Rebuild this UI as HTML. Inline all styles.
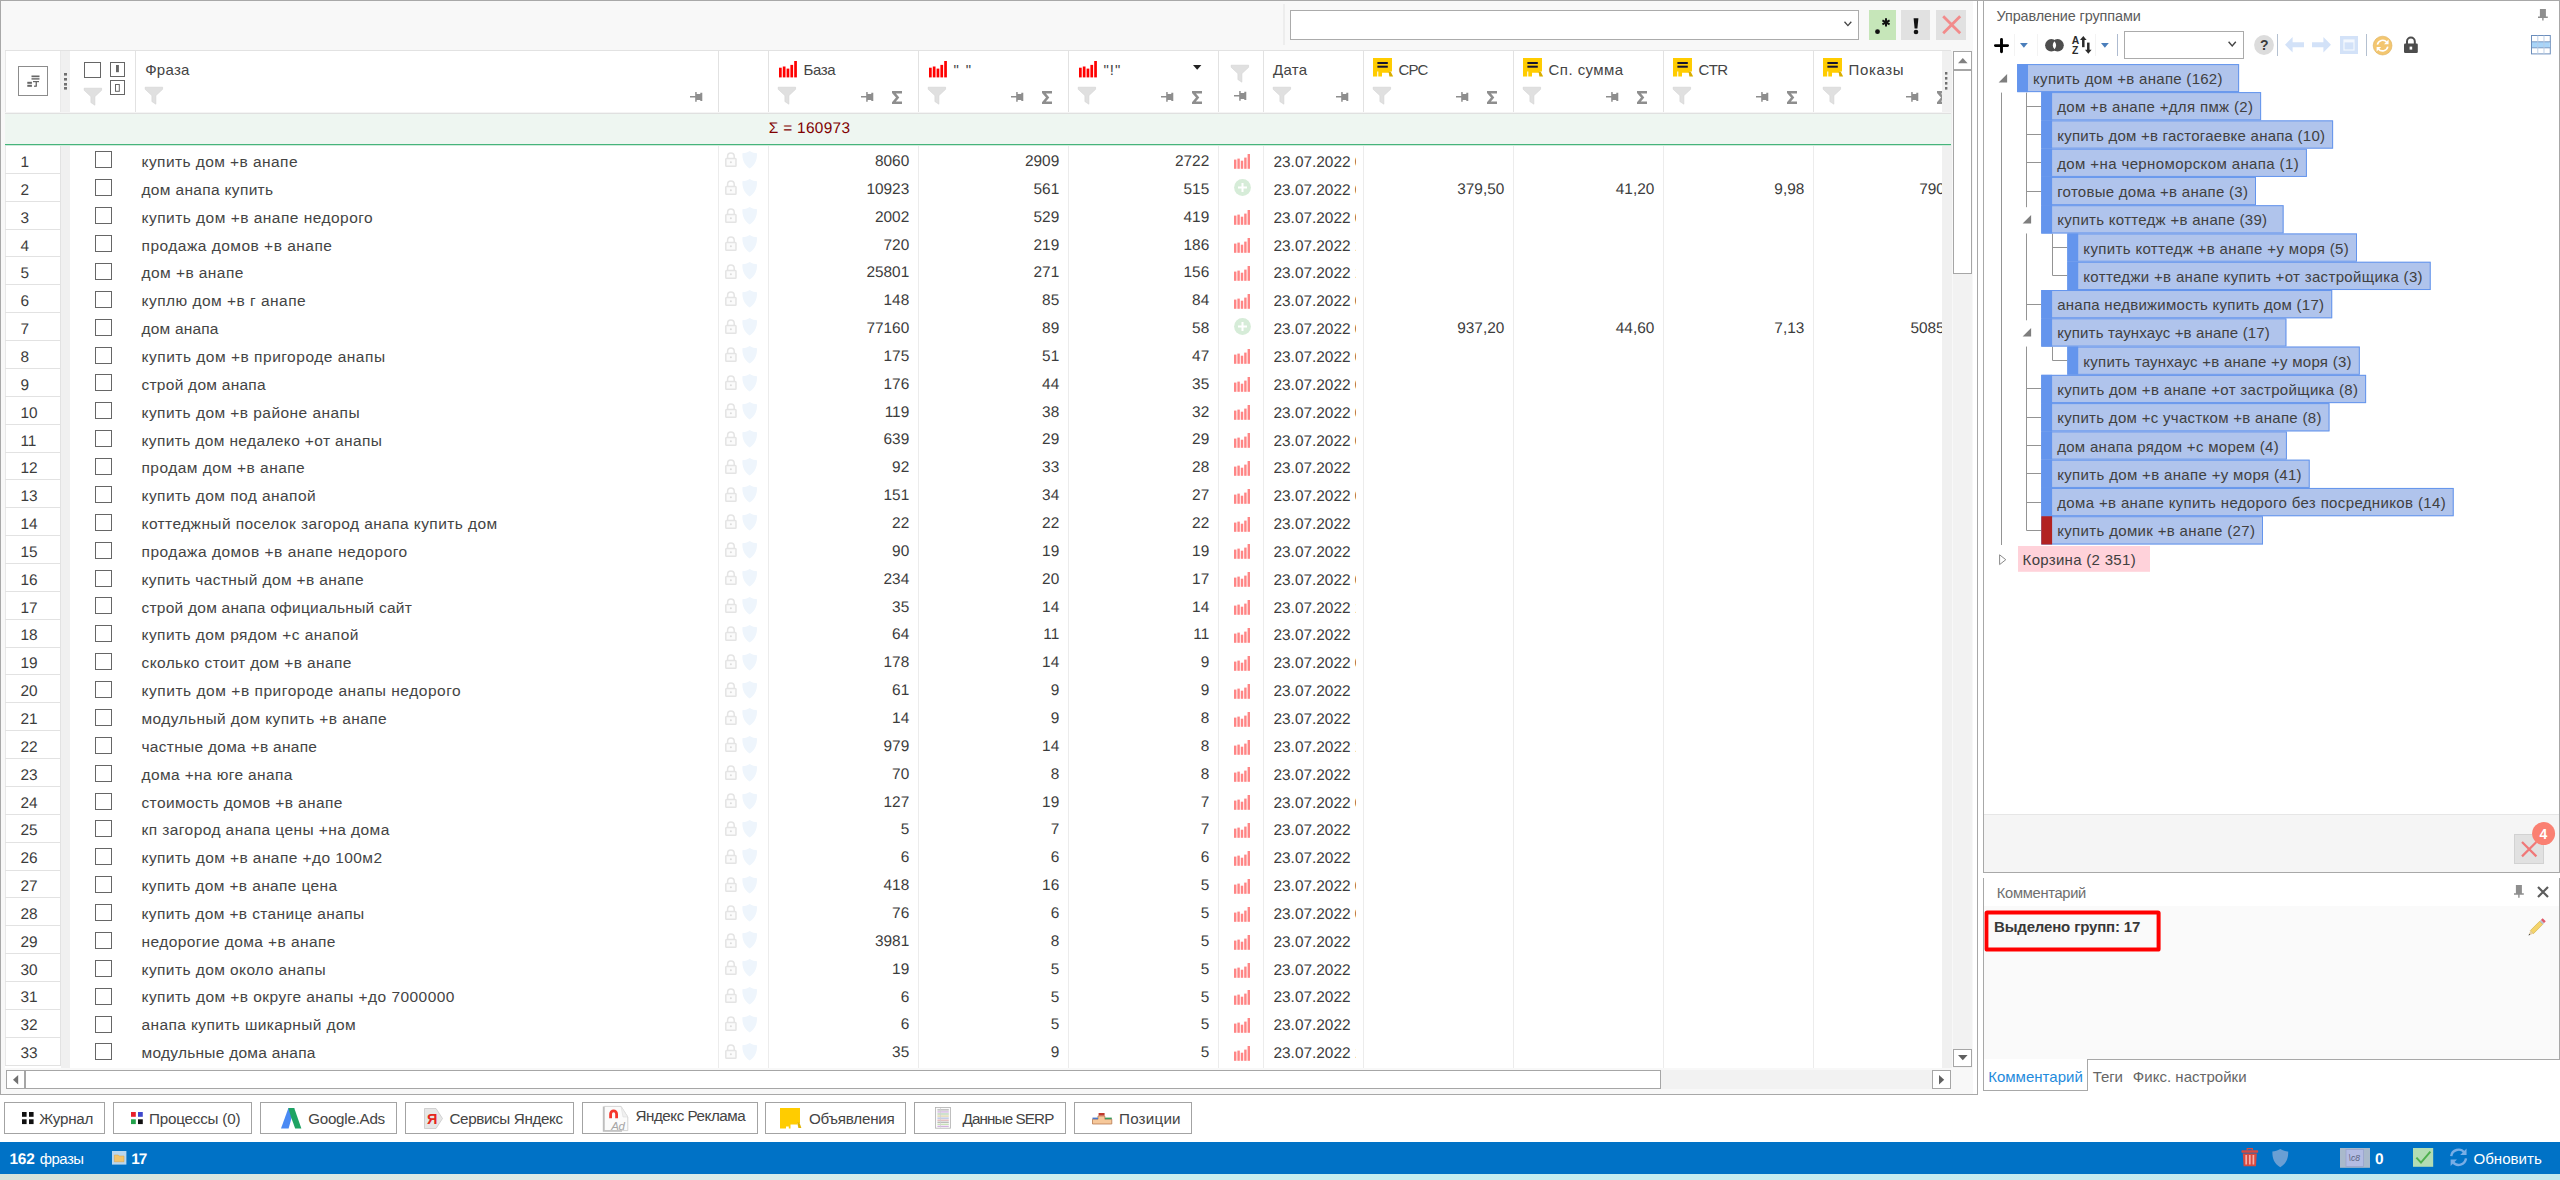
<!DOCTYPE html>
<html><head><meta charset="utf-8"><title>UI</title>
<style>
html,body{margin:0;padding:0}
html{width:2560px;height:1180px;overflow:hidden}
body{width:2560px;height:1180px;position:relative;overflow:hidden;background:#fff;font-family:"Liberation Sans", sans-serif}
.a{position:absolute;box-sizing:border-box}
.t{white-space:nowrap;line-height:1}
svg{overflow:visible}
</style></head>
<body>
<div class="a" style="left:1px;top:1px;width:1972px;height:1093px;background:#f8f8f8;"></div>
<div class="a" style="left:0px;top:0px;width:2560px;height:1px;background:#a8a8a8;"></div>
<div class="a" style="left:0px;top:0px;width:1px;height:1095px;background:#a8a8a8;"></div>
<div class="a" style="left:0px;top:1094px;width:1978px;height:1px;background:#a8a8a8;"></div>
<div class="a" style="left:1977px;top:0px;width:1px;height:1095px;background:#a8a8a8;"></div>
<div class="a" style="left:1283px;top:4px;width:2px;height:41px;background:#ededed;"></div>
<div class="a" style="left:1290px;top:10px;width:569px;height:30px;background:#fff;border:1px solid #ababab;"></div>
<svg class="a" style="left:1843.6px;top:21px;" width="8" height="6" viewBox="0 0 8 6"><path d="M0.5,0.7 L3.9,4.6 L7.3,0.7" fill="none" stroke="#444" stroke-width="1.3"/></svg>
<div class="a" style="left:1869px;top:10px;width:27px;height:30px;background:#c6e6b9;"></div>
<div class="a" style="left:1901px;top:10px;width:29px;height:30px;background:#e1e1e1;"></div>
<div class="a" style="left:1935.5px;top:10px;width:30px;height:30px;background:#e1e1e1;"></div>
<svg class="a" style="left:1874px;top:17px;" width="18" height="18" viewBox="0 0 18 18"><circle cx="3.5" cy="14.7" r="2.4" fill="#111"/><path d="M12,1.2 V9.4 M8.4,3.3 L15.6,7.3 M15.6,3.3 L8.4,7.3" stroke="#111" stroke-width="2"/></svg>
<svg class="a" style="left:1912.6px;top:18px;" width="6" height="16.4" viewBox="0 0 6 16.4"><path d="M0.6,0.2 H5.4 L4.4,10.6 H1.6 Z" fill="#111"/><circle cx="3" cy="14" r="2.3" fill="#111"/></svg>
<svg class="a" style="left:1941.6px;top:15px;" width="19.4" height="19.4" viewBox="0 0 19.4 19.4"><path d="M1.2,1.2 L18.2,18.2 M18.2,1.2 L1.2,18.2" stroke="#f28b8b" stroke-width="2.8"/></svg>
<div class="a" style="left:5px;top:50px;width:1946px;height:1018px;background:#fff;"></div>
<div class="a" style="left:61px;top:51px;width:9px;height:1017px;background:#f0f0f0;"></div>
<div class="a" style="left:1942px;top:51px;width:9.6px;height:1017px;background:#f0f0f0;"></div>
<div class="a" style="left:5px;top:50px;width:1946px;height:1px;background:#e2e2e2;"></div>
<div class="a" style="left:5px;top:112px;width:1946px;height:1px;background:#f4f4f4;"></div>
<div class="a" style="left:5px;top:113px;width:1946px;height:1px;background:#e0e0e0;"></div>
<div class="a" style="left:5px;top:51px;width:1px;height:61px;background:#e8e8e8;"></div>
<div class="a" style="left:5px;top:114px;width:1946px;height:30px;background:#eef6f1;"></div>
<div class="a" style="left:5px;top:144px;width:1946px;height:1px;background:#45b47b;"></div>
<div class="a" style="left:5px;top:145px;width:1946px;height:1px;background:#cfeadb;"></div>
<div class="a" style="left:135px;top:51px;width:1px;height:61px;background:#e2e2e2;"></div>
<div class="a" style="left:718px;top:51px;width:1px;height:61px;background:#e2e2e2;"></div>
<div class="a" style="left:768px;top:51px;width:1px;height:61px;background:#e2e2e2;"></div>
<div class="a" style="left:918px;top:51px;width:1px;height:61px;background:#e2e2e2;"></div>
<div class="a" style="left:1068px;top:51px;width:1px;height:61px;background:#e2e2e2;"></div>
<div class="a" style="left:1218px;top:51px;width:1px;height:61px;background:#e2e2e2;"></div>
<div class="a" style="left:1263px;top:51px;width:1px;height:61px;background:#e2e2e2;"></div>
<div class="a" style="left:1363px;top:51px;width:1px;height:61px;background:#e2e2e2;"></div>
<div class="a" style="left:1513px;top:51px;width:1px;height:61px;background:#e2e2e2;"></div>
<div class="a" style="left:1663px;top:51px;width:1px;height:61px;background:#e2e2e2;"></div>
<div class="a" style="left:1813px;top:51px;width:1px;height:61px;background:#e2e2e2;"></div>
<div class="a" style="left:60px;top:51px;width:1px;height:61px;background:#e9e9e9;"></div>
<div class="a" style="left:718px;top:146px;width:1px;height:922px;background:#ececec;"></div>
<div class="a" style="left:768px;top:146px;width:1px;height:922px;background:#ececec;"></div>
<div class="a" style="left:918px;top:146px;width:1px;height:922px;background:#ececec;"></div>
<div class="a" style="left:1068px;top:146px;width:1px;height:922px;background:#ececec;"></div>
<div class="a" style="left:1218px;top:146px;width:1px;height:922px;background:#ececec;"></div>
<div class="a" style="left:1263px;top:146px;width:1px;height:922px;background:#ececec;"></div>
<div class="a" style="left:1363px;top:146px;width:1px;height:922px;background:#ececec;"></div>
<div class="a" style="left:1513px;top:146px;width:1px;height:922px;background:#ececec;"></div>
<div class="a" style="left:1663px;top:146px;width:1px;height:922px;background:#ececec;"></div>
<div class="a" style="left:1813px;top:146px;width:1px;height:922px;background:#ececec;"></div>
<div class="a" style="left:60px;top:146px;width:1px;height:922px;background:#e2e2e2;"></div>
<div class="a" style="left:5px;top:146px;width:1px;height:922px;background:#e8e8e8;"></div>
<div class="a" style="left:18px;top:66px;width:30px;height:30px;background:#fff;border:1px solid #8c8c8c;"></div>
<svg class="a" style="left:26.5px;top:74.5px;" width="13" height="13" viewBox="0 0 13 13"><rect x="4.5" y="0.5" width="8" height="1.7" fill="#666"/><rect x="4.5" y="3.2" width="8" height="1.4" fill="#666"/><rect x="0.3" y="6.8" width="4.6" height="2" fill="#666"/><rect x="0.3" y="9.8" width="4.6" height="2" fill="#666"/><rect x="6" y="6" width="6" height="1.2" fill="#666"/><rect x="8.6" y="6" width="1.3" height="5.5" fill="#666"/><rect x="7" y="10.6" width="2.5" height="1.2" fill="#666"/></svg>
<svg class="a" style="left:64px;top:72.6px;" width="3" height="2.6" viewBox="0 0 3 2.6"><rect width="3" height="2.6" fill="#707070"/></svg>
<svg class="a" style="left:64px;top:77.5px;" width="3" height="2.6" viewBox="0 0 3 2.6"><rect width="3" height="2.6" fill="#707070"/></svg>
<svg class="a" style="left:64px;top:82.5px;" width="3" height="2.6" viewBox="0 0 3 2.6"><rect width="3" height="2.6" fill="#707070"/></svg>
<svg class="a" style="left:64px;top:87.4px;" width="3" height="2.6" viewBox="0 0 3 2.6"><rect width="3" height="2.6" fill="#707070"/></svg>
<div class="a" style="left:84px;top:62px;width:17px;height:16px;background:#fff;border:1px solid #666;"></div>
<div class="a" style="left:110px;top:62px;width:15px;height:15px;background:#fff;border:1px solid #666;"></div>
<div class="a" style="left:110px;top:80px;width:15px;height:15px;background:#fff;border:1px solid #666;"></div>
<svg class="a" style="left:116px;top:65.4px;" width="3" height="7.2" viewBox="0 0 3 7.2"><rect width="2.9" height="7.2" fill="#666"/></svg>
<svg class="a" style="left:115.2px;top:83.9px;" width="4.8" height="7.8" viewBox="0 0 4.8 7.8"><rect x="0.5" y="0.5" width="3.8" height="6.8" fill="none" stroke="#666" stroke-width="1"/></svg>
<svg class="a" style="left:83.6px;top:87.8px;" width="18" height="17.4" viewBox="0 0 18 17.4"><path d="M0.2,0.2 H17.6 V2.3 L10.9,8.6 V17.2 L6.9,14.6 V8.6 L0.2,2.3 Z" fill="#e0e0e0" stroke="#d2d2d2" stroke-width="0.6"/></svg>
<div class="a t" style="top:62px;font-size:15px;color:#444;letter-spacing:0.26px;left:145.2px;">Фраза</div>
<svg class="a" style="left:144.9px;top:87px;" width="18" height="17.4" viewBox="0 0 18 17.4"><path d="M0.2,0.2 H17.6 V2.3 L10.9,8.6 V17.2 L6.9,14.6 V8.6 L0.2,2.3 Z" fill="#e0e0e0" stroke="#d2d2d2" stroke-width="0.6"/></svg>
<svg class="a" style="left:690px;top:92.3px;" width="12.4" height="9.8" viewBox="0 0 12.4 9.8"><path d="M0,4.1 H5.2 V0 H6.7 V1.9 H10.3 V0.8 H12.3 V9 H10.3 V7.9 H6.7 V9.8 H5.2 V5.6 H0 Z" fill="#8e8e8e"/></svg>
<svg class="a" style="left:778.8px;top:61.4px;" width="18" height="16.5" viewBox="0 0 18 16.5"><rect x="0" y="6.7" width="2.7" height="9.7" fill="#ff0000"/><rect x="3.8" y="5.5" width="2.7" height="10.9" fill="#ff0000"/><rect x="7.6" y="7.6" width="2.7" height="8.8" fill="#ff0000"/><rect x="11.4" y="3.9" width="2.7" height="12.5" fill="#ff0000"/><rect x="15.2" y="0" width="2.7" height="16.4" fill="#ff0000"/></svg>
<div class="a t" style="top:62px;font-size:15px;color:#444;letter-spacing:-0.42px;left:803.6px;">База</div>
<svg class="a" style="left:778px;top:87.1px;" width="18" height="17.4" viewBox="0 0 18 17.4"><path d="M0.2,0.2 H17.6 V2.3 L10.9,8.6 V17.2 L6.9,14.6 V8.6 L0.2,2.3 Z" fill="#e0e0e0" stroke="#d2d2d2" stroke-width="0.6"/></svg>
<svg class="a" style="left:861px;top:92.2px;" width="12.4" height="9.8" viewBox="0 0 12.4 9.8"><path d="M0,4.1 H5.2 V0 H6.7 V1.9 H10.3 V0.8 H12.3 V9 H10.3 V7.9 H6.7 V9.8 H5.2 V5.6 H0 Z" fill="#8e8e8e"/></svg>
<svg class="a" style="left:891.8px;top:90.8px;" width="10.2" height="13.2" viewBox="0 0 10.2 13.2"><path d="M0,0 H10 V2.5 H3.9 L7.3,6.5 L3.9,10.6 H10 V13.1 H0 V11.2 L4,6.5 L0,1.9 Z" fill="#8e8e8e"/></svg>
<svg class="a" style="left:928.8px;top:61.4px;" width="18" height="16.5" viewBox="0 0 18 16.5"><rect x="0" y="6.7" width="2.7" height="9.7" fill="#ff0000"/><rect x="3.8" y="5.5" width="2.7" height="10.9" fill="#ff0000"/><rect x="7.6" y="7.6" width="2.7" height="8.8" fill="#ff0000"/><rect x="11.4" y="3.9" width="2.7" height="12.5" fill="#ff0000"/><rect x="15.2" y="0" width="2.7" height="16.4" fill="#ff0000"/></svg>
<div class="a t" style="top:62px;font-size:15px;color:#444;letter-spacing:1.39px;left:953.6px;">&quot; &quot;</div>
<svg class="a" style="left:928px;top:87.1px;" width="18" height="17.4" viewBox="0 0 18 17.4"><path d="M0.2,0.2 H17.6 V2.3 L10.9,8.6 V17.2 L6.9,14.6 V8.6 L0.2,2.3 Z" fill="#e0e0e0" stroke="#d2d2d2" stroke-width="0.6"/></svg>
<svg class="a" style="left:1011px;top:92.2px;" width="12.4" height="9.8" viewBox="0 0 12.4 9.8"><path d="M0,4.1 H5.2 V0 H6.7 V1.9 H10.3 V0.8 H12.3 V9 H10.3 V7.9 H6.7 V9.8 H5.2 V5.6 H0 Z" fill="#8e8e8e"/></svg>
<svg class="a" style="left:1041.8px;top:90.8px;" width="10.2" height="13.2" viewBox="0 0 10.2 13.2"><path d="M0,0 H10 V2.5 H3.9 L7.3,6.5 L3.9,10.6 H10 V13.1 H0 V11.2 L4,6.5 L0,1.9 Z" fill="#8e8e8e"/></svg>
<svg class="a" style="left:1078.8px;top:61.4px;" width="18" height="16.5" viewBox="0 0 18 16.5"><rect x="0" y="6.7" width="2.7" height="9.7" fill="#ff0000"/><rect x="3.8" y="5.5" width="2.7" height="10.9" fill="#ff0000"/><rect x="7.6" y="7.6" width="2.7" height="8.8" fill="#ff0000"/><rect x="11.4" y="3.9" width="2.7" height="12.5" fill="#ff0000"/><rect x="15.2" y="0" width="2.7" height="16.4" fill="#ff0000"/></svg>
<div class="a t" style="top:62px;font-size:15px;color:#444;letter-spacing:0.94px;left:1103.6px;">&quot;!&quot;</div>
<svg class="a" style="left:1078px;top:87.1px;" width="18" height="17.4" viewBox="0 0 18 17.4"><path d="M0.2,0.2 H17.6 V2.3 L10.9,8.6 V17.2 L6.9,14.6 V8.6 L0.2,2.3 Z" fill="#e0e0e0" stroke="#d2d2d2" stroke-width="0.6"/></svg>
<svg class="a" style="left:1161px;top:92.2px;" width="12.4" height="9.8" viewBox="0 0 12.4 9.8"><path d="M0,4.1 H5.2 V0 H6.7 V1.9 H10.3 V0.8 H12.3 V9 H10.3 V7.9 H6.7 V9.8 H5.2 V5.6 H0 Z" fill="#8e8e8e"/></svg>
<svg class="a" style="left:1191.8px;top:90.8px;" width="10.2" height="13.2" viewBox="0 0 10.2 13.2"><path d="M0,0 H10 V2.5 H3.9 L7.3,6.5 L3.9,10.6 H10 V13.1 H0 V11.2 L4,6.5 L0,1.9 Z" fill="#8e8e8e"/></svg>
<svg class="a" style="left:1193px;top:65.1px;" width="8.4" height="4.8" viewBox="0 0 8.4 4.8"><path d="M0,0 H8.4 L4.2,4.7 Z" fill="#222"/></svg>
<svg class="a" style="left:1231px;top:65.1px;" width="18" height="17.4" viewBox="0 0 18 17.4"><path d="M0.2,0.2 H17.6 V2.3 L10.9,8.6 V17.2 L6.9,14.6 V8.6 L0.2,2.3 Z" fill="#e0e0e0" stroke="#d2d2d2" stroke-width="0.6"/></svg>
<svg class="a" style="left:1234.3px;top:91.3px;" width="12.4" height="9.8" viewBox="0 0 12.4 9.8"><path d="M0,4.1 H5.2 V0 H6.7 V1.9 H10.3 V0.8 H12.3 V9 H10.3 V7.9 H6.7 V9.8 H5.2 V5.6 H0 Z" fill="#8e8e8e"/></svg>
<div class="a t" style="top:62px;font-size:15px;color:#444;letter-spacing:0.26px;left:1273.1px;">Дата</div>
<svg class="a" style="left:1273px;top:87.1px;" width="18" height="17.4" viewBox="0 0 18 17.4"><path d="M0.2,0.2 H17.6 V2.3 L10.9,8.6 V17.2 L6.9,14.6 V8.6 L0.2,2.3 Z" fill="#e0e0e0" stroke="#d2d2d2" stroke-width="0.6"/></svg>
<svg class="a" style="left:1336px;top:92.2px;" width="12.4" height="9.8" viewBox="0 0 12.4 9.8"><path d="M0,4.1 H5.2 V0 H6.7 V1.9 H10.3 V0.8 H12.3 V9 H10.3 V7.9 H6.7 V9.8 H5.2 V5.6 H0 Z" fill="#8e8e8e"/></svg>
<svg class="a" style="left:1373px;top:58.4px;" width="20.2" height="19" viewBox="0 0 20.2 19"><path d="M0,0 H19 V13.6 H16.2 V14.8 H9 V18.6 H5.3 V13.6 H4.2 V18.6 H0 Z" fill="#ffcc00"/><path d="M15.6,13.4 H17.6 L20.2,18.6 H16.4 Z" fill="#d9ad00"/><rect x="4.4" y="4" width="10.4" height="2" fill="#151530"/><rect x="4.4" y="7.7" width="10.4" height="2" fill="#151530"/></svg>
<div class="a t" style="top:62px;font-size:15px;color:#444;letter-spacing:-0.94px;left:1398.6px;">CPC</div>
<svg class="a" style="left:1373px;top:87.1px;" width="18" height="17.4" viewBox="0 0 18 17.4"><path d="M0.2,0.2 H17.6 V2.3 L10.9,8.6 V17.2 L6.9,14.6 V8.6 L0.2,2.3 Z" fill="#e0e0e0" stroke="#d2d2d2" stroke-width="0.6"/></svg>
<svg class="a" style="left:1456px;top:92.2px;" width="12.4" height="9.8" viewBox="0 0 12.4 9.8"><path d="M0,4.1 H5.2 V0 H6.7 V1.9 H10.3 V0.8 H12.3 V9 H10.3 V7.9 H6.7 V9.8 H5.2 V5.6 H0 Z" fill="#8e8e8e"/></svg>
<svg class="a" style="left:1486.8px;top:90.8px;" width="10.2" height="13.2" viewBox="0 0 10.2 13.2"><path d="M0,0 H10 V2.5 H3.9 L7.3,6.5 L3.9,10.6 H10 V13.1 H0 V11.2 L4,6.5 L0,1.9 Z" fill="#8e8e8e"/></svg>
<svg class="a" style="left:1523px;top:58.4px;" width="20.2" height="19" viewBox="0 0 20.2 19"><path d="M0,0 H19 V13.6 H16.2 V14.8 H9 V18.6 H5.3 V13.6 H4.2 V18.6 H0 Z" fill="#ffcc00"/><path d="M15.6,13.4 H17.6 L20.2,18.6 H16.4 Z" fill="#d9ad00"/><rect x="4.4" y="4" width="10.4" height="2" fill="#151530"/><rect x="4.4" y="7.7" width="10.4" height="2" fill="#151530"/></svg>
<div class="a t" style="top:62px;font-size:15px;color:#444;letter-spacing:0.44px;left:1548.6px;">Сп. сумма</div>
<svg class="a" style="left:1523px;top:87.1px;" width="18" height="17.4" viewBox="0 0 18 17.4"><path d="M0.2,0.2 H17.6 V2.3 L10.9,8.6 V17.2 L6.9,14.6 V8.6 L0.2,2.3 Z" fill="#e0e0e0" stroke="#d2d2d2" stroke-width="0.6"/></svg>
<svg class="a" style="left:1606px;top:92.2px;" width="12.4" height="9.8" viewBox="0 0 12.4 9.8"><path d="M0,4.1 H5.2 V0 H6.7 V1.9 H10.3 V0.8 H12.3 V9 H10.3 V7.9 H6.7 V9.8 H5.2 V5.6 H0 Z" fill="#8e8e8e"/></svg>
<svg class="a" style="left:1636.8px;top:90.8px;" width="10.2" height="13.2" viewBox="0 0 10.2 13.2"><path d="M0,0 H10 V2.5 H3.9 L7.3,6.5 L3.9,10.6 H10 V13.1 H0 V11.2 L4,6.5 L0,1.9 Z" fill="#8e8e8e"/></svg>
<svg class="a" style="left:1673px;top:58.4px;" width="20.2" height="19" viewBox="0 0 20.2 19"><path d="M0,0 H19 V13.6 H16.2 V14.8 H9 V18.6 H5.3 V13.6 H4.2 V18.6 H0 Z" fill="#ffcc00"/><path d="M15.6,13.4 H17.6 L20.2,18.6 H16.4 Z" fill="#d9ad00"/><rect x="4.4" y="4" width="10.4" height="2" fill="#151530"/><rect x="4.4" y="7.7" width="10.4" height="2" fill="#151530"/></svg>
<div class="a t" style="top:62px;font-size:15px;color:#444;letter-spacing:-0.66px;left:1698.6px;">CTR</div>
<svg class="a" style="left:1673px;top:87.1px;" width="18" height="17.4" viewBox="0 0 18 17.4"><path d="M0.2,0.2 H17.6 V2.3 L10.9,8.6 V17.2 L6.9,14.6 V8.6 L0.2,2.3 Z" fill="#e0e0e0" stroke="#d2d2d2" stroke-width="0.6"/></svg>
<svg class="a" style="left:1756px;top:92.2px;" width="12.4" height="9.8" viewBox="0 0 12.4 9.8"><path d="M0,4.1 H5.2 V0 H6.7 V1.9 H10.3 V0.8 H12.3 V9 H10.3 V7.9 H6.7 V9.8 H5.2 V5.6 H0 Z" fill="#8e8e8e"/></svg>
<svg class="a" style="left:1786.8px;top:90.8px;" width="10.2" height="13.2" viewBox="0 0 10.2 13.2"><path d="M0,0 H10 V2.5 H3.9 L7.3,6.5 L3.9,10.6 H10 V13.1 H0 V11.2 L4,6.5 L0,1.9 Z" fill="#8e8e8e"/></svg>
<svg class="a" style="left:1823px;top:58.4px;" width="20.2" height="19" viewBox="0 0 20.2 19"><path d="M0,0 H19 V13.6 H16.2 V14.8 H9 V18.6 H5.3 V13.6 H4.2 V18.6 H0 Z" fill="#ffcc00"/><path d="M15.6,13.4 H17.6 L20.2,18.6 H16.4 Z" fill="#d9ad00"/><rect x="4.4" y="4" width="10.4" height="2" fill="#151530"/><rect x="4.4" y="7.7" width="10.4" height="2" fill="#151530"/></svg>
<div class="a t" style="top:62px;font-size:15px;color:#444;letter-spacing:0.63px;left:1848.6px;">Показы</div>
<svg class="a" style="left:1823px;top:87.1px;" width="18" height="17.4" viewBox="0 0 18 17.4"><path d="M0.2,0.2 H17.6 V2.3 L10.9,8.6 V17.2 L6.9,14.6 V8.6 L0.2,2.3 Z" fill="#e0e0e0" stroke="#d2d2d2" stroke-width="0.6"/></svg>
<svg class="a" style="left:1906px;top:92.2px;" width="12.4" height="9.8" viewBox="0 0 12.4 9.8"><path d="M0,4.1 H5.2 V0 H6.7 V1.9 H10.3 V0.8 H12.3 V9 H10.3 V7.9 H6.7 V9.8 H5.2 V5.6 H0 Z" fill="#8e8e8e"/></svg>
<div class="a" style="left:1936px;top:88px;width:6px;height:20px;overflow:hidden"><svg class="a" style="left:1px;top:2.8px" width="10.2" height="13.2" viewBox="0 0 10.2 13.2"><path d="M0,0 H10 V2.5 H3.9 L7.3,6.5 L3.9,10.6 H10 V13.1 H0 V11.2 L4,6.5 L0,1.9 Z" fill="#8e8e8e"/></svg></div>
<svg class="a" style="left:1945px;top:72.3px;" width="2.4" height="2.6" viewBox="0 0 2.4 2.6"><rect width="2.4" height="2.6" fill="#707070"/></svg>
<svg class="a" style="left:1945px;top:77.2px;" width="2.4" height="2.6" viewBox="0 0 2.4 2.6"><rect width="2.4" height="2.6" fill="#707070"/></svg>
<svg class="a" style="left:1945px;top:82.2px;" width="2.4" height="2.6" viewBox="0 0 2.4 2.6"><rect width="2.4" height="2.6" fill="#707070"/></svg>
<svg class="a" style="left:1945px;top:87.2px;" width="2.4" height="2.6" viewBox="0 0 2.4 2.6"><rect width="2.4" height="2.6" fill="#707070"/></svg>
<div class="a t" style="top:121px;font-size:15.4px;color:#800000;letter-spacing:0.31px;text-rendering:geometricPrecision;left:768.8px;">Σ = 160973</div>
<div class="a" style="left:5px;top:173px;width:56px;height:1px;background:#e2e2e2;"></div>
<div class="a t" style="top:155px;font-size:15.4px;color:#3c3c3c;text-rendering:geometricPrecision;left:20.4px;">1</div>
<div class="a" style="left:95px;top:151px;width:17px;height:17px;background:#fff;border:1px solid #666;"></div>
<div class="a t" style="top:154px;font-size:15.5px;color:#444;letter-spacing:0.43px;left:141.5px;">купить дом +в анапе</div>
<svg class="a" style="left:725.1px;top:152.1px;" width="11.8" height="15" viewBox="0 0 11.8 15"><path d="M2.6,6.4 V4.2 A3.3,3.3 0 0 1 9.2,4.2 V6.4" fill="none" stroke="#e4e4e4" stroke-width="1.5"/><rect x="0.8" y="6.4" width="10.2" height="7.8" rx="0.8" fill="#fbfbfb" stroke="#e4e4e4" stroke-width="1.5"/><circle cx="5.9" cy="10.3" r="1" fill="#dcdcdc"/></svg>
<svg class="a" style="left:742.4px;top:150.9px;" width="15.4" height="17.6" viewBox="0 0 15.4 17.6"><path d="M7.7,0 C5.2,1.6 2.7,2.1 0.4,2.3 C0.2,8.2 1.6,13.6 7.7,17.5 C13.8,13.6 15.2,8.2 15,2.3 C12.7,2.1 10.2,1.6 7.7,0 Z" fill="#eef5fc"/></svg>
<div class="a t" style="top:154px;font-size:15.4px;color:#3c3c3c;text-rendering:geometricPrecision;right:1650.8px;">8060</div>
<div class="a t" style="top:154px;font-size:15.4px;color:#3c3c3c;text-rendering:geometricPrecision;right:1500.8px;">2909</div>
<div class="a t" style="top:154px;font-size:15.4px;color:#3c3c3c;text-rendering:geometricPrecision;right:1350.8px;">2722</div>
<svg class="a" style="left:1233.9px;top:154.2px;" width="16.2" height="15" viewBox="0 0 16.2 15"><rect x="0" y="5.6" width="2.4" height="9.2" fill="#ff8585"/><rect x="3.4" y="4.6" width="2.4" height="10.2" fill="#ff8585"/><rect x="6.8" y="6.7" width="2.4" height="8.1" fill="#ff8585"/><rect x="10.2" y="3.6" width="2.4" height="11.2" fill="#ff8585"/><rect x="13.6" y="0" width="2.4" height="14.8" fill="#ff8585"/></svg>
<div class="a" style="left:1273.5px;top:153px;width:82.9px;height:22.48px;overflow:hidden"><div class="a t" style="font-size:15.4px;color:#3c3c3c;left:0;top:2px;text-rendering:geometricPrecision;">23.07.2022 09:41</div></div>
<div class="a" style="left:5px;top:201px;width:56px;height:1px;background:#e2e2e2;"></div>
<div class="a t" style="top:183px;font-size:15.4px;color:#3c3c3c;text-rendering:geometricPrecision;left:20.4px;">2</div>
<div class="a" style="left:95px;top:179px;width:17px;height:17px;background:#fff;border:1px solid #666;"></div>
<div class="a t" style="top:182px;font-size:15.5px;color:#444;letter-spacing:0.33px;left:141.5px;">дом анапа купить</div>
<svg class="a" style="left:725.1px;top:179.97px;" width="11.8" height="15" viewBox="0 0 11.8 15"><path d="M2.6,6.4 V4.2 A3.3,3.3 0 0 1 9.2,4.2 V6.4" fill="none" stroke="#e4e4e4" stroke-width="1.5"/><rect x="0.8" y="6.4" width="10.2" height="7.8" rx="0.8" fill="#fbfbfb" stroke="#e4e4e4" stroke-width="1.5"/><circle cx="5.9" cy="10.3" r="1" fill="#dcdcdc"/></svg>
<svg class="a" style="left:742.4px;top:178.78px;" width="15.4" height="17.6" viewBox="0 0 15.4 17.6"><path d="M7.7,0 C5.2,1.6 2.7,2.1 0.4,2.3 C0.2,8.2 1.6,13.6 7.7,17.5 C13.8,13.6 15.2,8.2 15,2.3 C12.7,2.1 10.2,1.6 7.7,0 Z" fill="#eef5fc"/></svg>
<div class="a t" style="top:182px;font-size:15.4px;color:#3c3c3c;text-rendering:geometricPrecision;right:1650.8px;">10923</div>
<div class="a t" style="top:182px;font-size:15.4px;color:#3c3c3c;text-rendering:geometricPrecision;right:1500.8px;">561</div>
<div class="a t" style="top:182px;font-size:15.4px;color:#3c3c3c;text-rendering:geometricPrecision;right:1350.8px;">515</div>
<svg class="a" style="left:1233.5px;top:178.78px;" width="17" height="17" viewBox="0 0 17 17"><circle cx="8.5" cy="8.5" r="8.4" fill="#d6ecd8"/><path d="M8.5,4 V13 M4,8.5 H13" stroke="#fff" stroke-width="2"/></svg>
<div class="a" style="left:1273.5px;top:181px;width:82.9px;height:22.48px;overflow:hidden"><div class="a t" style="font-size:15.4px;color:#3c3c3c;left:0;top:2px;text-rendering:geometricPrecision;">23.07.2022 09:41</div></div>
<div class="a t" style="top:182px;font-size:15.4px;color:#3c3c3c;text-rendering:geometricPrecision;right:1055.7px;">379,50</div>
<div class="a t" style="top:182px;font-size:15.4px;color:#3c3c3c;text-rendering:geometricPrecision;right:905.7px;">41,20</div>
<div class="a t" style="top:182px;font-size:15.4px;color:#3c3c3c;text-rendering:geometricPrecision;right:755.7px;">9,98</div>
<div class="a" style="left:1919.2px;top:180px;width:22.8px;height:22.48px;overflow:hidden"><div class="a t" style="font-size:15.4px;color:#3c3c3c;left:0;top:2px;text-rendering:geometricPrecision;">7903</div></div>
<div class="a" style="left:5px;top:229px;width:56px;height:1px;background:#e2e2e2;"></div>
<div class="a t" style="top:211px;font-size:15.4px;color:#3c3c3c;text-rendering:geometricPrecision;left:20.4px;">3</div>
<div class="a" style="left:95px;top:207px;width:17px;height:17px;background:#fff;border:1px solid #666;"></div>
<div class="a t" style="top:210px;font-size:15.5px;color:#444;letter-spacing:0.48px;left:141.5px;">купить дом +в анапе недорого</div>
<svg class="a" style="left:725.1px;top:207.85px;" width="11.8" height="15" viewBox="0 0 11.8 15"><path d="M2.6,6.4 V4.2 A3.3,3.3 0 0 1 9.2,4.2 V6.4" fill="none" stroke="#e4e4e4" stroke-width="1.5"/><rect x="0.8" y="6.4" width="10.2" height="7.8" rx="0.8" fill="#fbfbfb" stroke="#e4e4e4" stroke-width="1.5"/><circle cx="5.9" cy="10.3" r="1" fill="#dcdcdc"/></svg>
<svg class="a" style="left:742.4px;top:206.65px;" width="15.4" height="17.6" viewBox="0 0 15.4 17.6"><path d="M7.7,0 C5.2,1.6 2.7,2.1 0.4,2.3 C0.2,8.2 1.6,13.6 7.7,17.5 C13.8,13.6 15.2,8.2 15,2.3 C12.7,2.1 10.2,1.6 7.7,0 Z" fill="#eef5fc"/></svg>
<div class="a t" style="top:210px;font-size:15.4px;color:#3c3c3c;text-rendering:geometricPrecision;right:1650.8px;">2002</div>
<div class="a t" style="top:210px;font-size:15.4px;color:#3c3c3c;text-rendering:geometricPrecision;right:1500.8px;">529</div>
<div class="a t" style="top:210px;font-size:15.4px;color:#3c3c3c;text-rendering:geometricPrecision;right:1350.8px;">419</div>
<svg class="a" style="left:1233.9px;top:209.95px;" width="16.2" height="15" viewBox="0 0 16.2 15"><rect x="0" y="5.6" width="2.4" height="9.2" fill="#ff8585"/><rect x="3.4" y="4.6" width="2.4" height="10.2" fill="#ff8585"/><rect x="6.8" y="6.7" width="2.4" height="8.1" fill="#ff8585"/><rect x="10.2" y="3.6" width="2.4" height="11.2" fill="#ff8585"/><rect x="13.6" y="0" width="2.4" height="14.8" fill="#ff8585"/></svg>
<div class="a" style="left:1273.5px;top:209px;width:82.9px;height:22.48px;overflow:hidden"><div class="a t" style="font-size:15.4px;color:#3c3c3c;left:0;top:2px;text-rendering:geometricPrecision;">23.07.2022 09:41</div></div>
<div class="a" style="left:5px;top:256px;width:56px;height:1px;background:#e2e2e2;"></div>
<div class="a t" style="top:239px;font-size:15.4px;color:#3c3c3c;text-rendering:geometricPrecision;left:20.4px;">4</div>
<div class="a" style="left:95px;top:235px;width:17px;height:17px;background:#fff;border:1px solid #666;"></div>
<div class="a t" style="top:238px;font-size:15.5px;color:#444;letter-spacing:0.49px;left:141.5px;">продажа домов +в анапе</div>
<svg class="a" style="left:725.1px;top:235.72px;" width="11.8" height="15" viewBox="0 0 11.8 15"><path d="M2.6,6.4 V4.2 A3.3,3.3 0 0 1 9.2,4.2 V6.4" fill="none" stroke="#e4e4e4" stroke-width="1.5"/><rect x="0.8" y="6.4" width="10.2" height="7.8" rx="0.8" fill="#fbfbfb" stroke="#e4e4e4" stroke-width="1.5"/><circle cx="5.9" cy="10.3" r="1" fill="#dcdcdc"/></svg>
<svg class="a" style="left:742.4px;top:234.53px;" width="15.4" height="17.6" viewBox="0 0 15.4 17.6"><path d="M7.7,0 C5.2,1.6 2.7,2.1 0.4,2.3 C0.2,8.2 1.6,13.6 7.7,17.5 C13.8,13.6 15.2,8.2 15,2.3 C12.7,2.1 10.2,1.6 7.7,0 Z" fill="#eef5fc"/></svg>
<div class="a t" style="top:238px;font-size:15.4px;color:#3c3c3c;text-rendering:geometricPrecision;right:1650.8px;">720</div>
<div class="a t" style="top:238px;font-size:15.4px;color:#3c3c3c;text-rendering:geometricPrecision;right:1500.8px;">219</div>
<div class="a t" style="top:238px;font-size:15.4px;color:#3c3c3c;text-rendering:geometricPrecision;right:1350.8px;">186</div>
<svg class="a" style="left:1233.9px;top:237.83px;" width="16.2" height="15" viewBox="0 0 16.2 15"><rect x="0" y="5.6" width="2.4" height="9.2" fill="#ff8585"/><rect x="3.4" y="4.6" width="2.4" height="10.2" fill="#ff8585"/><rect x="6.8" y="6.7" width="2.4" height="8.1" fill="#ff8585"/><rect x="10.2" y="3.6" width="2.4" height="11.2" fill="#ff8585"/><rect x="13.6" y="0" width="2.4" height="14.8" fill="#ff8585"/></svg>
<div class="a" style="left:1273.5px;top:237px;width:82.9px;height:22.48px;overflow:hidden"><div class="a t" style="font-size:15.4px;color:#3c3c3c;left:0;top:2px;text-rendering:geometricPrecision;">23.07.2022 19:41</div></div>
<div class="a" style="left:5px;top:284px;width:56px;height:1px;background:#e2e2e2;"></div>
<div class="a t" style="top:266px;font-size:15.4px;color:#3c3c3c;text-rendering:geometricPrecision;left:20.4px;">5</div>
<div class="a" style="left:95px;top:263px;width:17px;height:17px;background:#fff;border:1px solid #666;"></div>
<div class="a t" style="top:265px;font-size:15.5px;color:#444;letter-spacing:0.44px;left:141.5px;">дом +в анапе</div>
<svg class="a" style="left:725.1px;top:263.6px;" width="11.8" height="15" viewBox="0 0 11.8 15"><path d="M2.6,6.4 V4.2 A3.3,3.3 0 0 1 9.2,4.2 V6.4" fill="none" stroke="#e4e4e4" stroke-width="1.5"/><rect x="0.8" y="6.4" width="10.2" height="7.8" rx="0.8" fill="#fbfbfb" stroke="#e4e4e4" stroke-width="1.5"/><circle cx="5.9" cy="10.3" r="1" fill="#dcdcdc"/></svg>
<svg class="a" style="left:742.4px;top:262.4px;" width="15.4" height="17.6" viewBox="0 0 15.4 17.6"><path d="M7.7,0 C5.2,1.6 2.7,2.1 0.4,2.3 C0.2,8.2 1.6,13.6 7.7,17.5 C13.8,13.6 15.2,8.2 15,2.3 C12.7,2.1 10.2,1.6 7.7,0 Z" fill="#eef5fc"/></svg>
<div class="a t" style="top:265px;font-size:15.4px;color:#3c3c3c;text-rendering:geometricPrecision;right:1650.8px;">25801</div>
<div class="a t" style="top:265px;font-size:15.4px;color:#3c3c3c;text-rendering:geometricPrecision;right:1500.8px;">271</div>
<div class="a t" style="top:265px;font-size:15.4px;color:#3c3c3c;text-rendering:geometricPrecision;right:1350.8px;">156</div>
<svg class="a" style="left:1233.9px;top:265.7px;" width="16.2" height="15" viewBox="0 0 16.2 15"><rect x="0" y="5.6" width="2.4" height="9.2" fill="#ff8585"/><rect x="3.4" y="4.6" width="2.4" height="10.2" fill="#ff8585"/><rect x="6.8" y="6.7" width="2.4" height="8.1" fill="#ff8585"/><rect x="10.2" y="3.6" width="2.4" height="11.2" fill="#ff8585"/><rect x="13.6" y="0" width="2.4" height="14.8" fill="#ff8585"/></svg>
<div class="a" style="left:1273.5px;top:264px;width:82.9px;height:22.48px;overflow:hidden"><div class="a t" style="font-size:15.4px;color:#3c3c3c;left:0;top:2px;text-rendering:geometricPrecision;">23.07.2022 19:41</div></div>
<div class="a" style="left:5px;top:312px;width:56px;height:1px;background:#e2e2e2;"></div>
<div class="a t" style="top:294px;font-size:15.4px;color:#3c3c3c;text-rendering:geometricPrecision;left:20.4px;">6</div>
<div class="a" style="left:95px;top:291px;width:17px;height:17px;background:#fff;border:1px solid #666;"></div>
<div class="a t" style="top:293px;font-size:15.5px;color:#444;letter-spacing:0.48px;left:141.5px;">куплю дом +в г анапе</div>
<svg class="a" style="left:725.1px;top:291.47px;" width="11.8" height="15" viewBox="0 0 11.8 15"><path d="M2.6,6.4 V4.2 A3.3,3.3 0 0 1 9.2,4.2 V6.4" fill="none" stroke="#e4e4e4" stroke-width="1.5"/><rect x="0.8" y="6.4" width="10.2" height="7.8" rx="0.8" fill="#fbfbfb" stroke="#e4e4e4" stroke-width="1.5"/><circle cx="5.9" cy="10.3" r="1" fill="#dcdcdc"/></svg>
<svg class="a" style="left:742.4px;top:290.27px;" width="15.4" height="17.6" viewBox="0 0 15.4 17.6"><path d="M7.7,0 C5.2,1.6 2.7,2.1 0.4,2.3 C0.2,8.2 1.6,13.6 7.7,17.5 C13.8,13.6 15.2,8.2 15,2.3 C12.7,2.1 10.2,1.6 7.7,0 Z" fill="#eef5fc"/></svg>
<div class="a t" style="top:293px;font-size:15.4px;color:#3c3c3c;text-rendering:geometricPrecision;right:1650.8px;">148</div>
<div class="a t" style="top:293px;font-size:15.4px;color:#3c3c3c;text-rendering:geometricPrecision;right:1500.8px;">85</div>
<div class="a t" style="top:293px;font-size:15.4px;color:#3c3c3c;text-rendering:geometricPrecision;right:1350.8px;">84</div>
<svg class="a" style="left:1233.9px;top:293.57px;" width="16.2" height="15" viewBox="0 0 16.2 15"><rect x="0" y="5.6" width="2.4" height="9.2" fill="#ff8585"/><rect x="3.4" y="4.6" width="2.4" height="10.2" fill="#ff8585"/><rect x="6.8" y="6.7" width="2.4" height="8.1" fill="#ff8585"/><rect x="10.2" y="3.6" width="2.4" height="11.2" fill="#ff8585"/><rect x="13.6" y="0" width="2.4" height="14.8" fill="#ff8585"/></svg>
<div class="a" style="left:1273.5px;top:292px;width:82.9px;height:22.48px;overflow:hidden"><div class="a t" style="font-size:15.4px;color:#3c3c3c;left:0;top:2px;text-rendering:geometricPrecision;">23.07.2022 09:41</div></div>
<div class="a" style="left:5px;top:340px;width:56px;height:1px;background:#e2e2e2;"></div>
<div class="a t" style="top:322px;font-size:15.4px;color:#3c3c3c;text-rendering:geometricPrecision;left:20.4px;">7</div>
<div class="a" style="left:95px;top:319px;width:17px;height:17px;background:#fff;border:1px solid #666;"></div>
<div class="a t" style="top:321px;font-size:15.5px;color:#444;letter-spacing:0.19px;left:141.5px;">дом анапа</div>
<svg class="a" style="left:725.1px;top:319.35px;" width="11.8" height="15" viewBox="0 0 11.8 15"><path d="M2.6,6.4 V4.2 A3.3,3.3 0 0 1 9.2,4.2 V6.4" fill="none" stroke="#e4e4e4" stroke-width="1.5"/><rect x="0.8" y="6.4" width="10.2" height="7.8" rx="0.8" fill="#fbfbfb" stroke="#e4e4e4" stroke-width="1.5"/><circle cx="5.9" cy="10.3" r="1" fill="#dcdcdc"/></svg>
<svg class="a" style="left:742.4px;top:318.15px;" width="15.4" height="17.6" viewBox="0 0 15.4 17.6"><path d="M7.7,0 C5.2,1.6 2.7,2.1 0.4,2.3 C0.2,8.2 1.6,13.6 7.7,17.5 C13.8,13.6 15.2,8.2 15,2.3 C12.7,2.1 10.2,1.6 7.7,0 Z" fill="#eef5fc"/></svg>
<div class="a t" style="top:321px;font-size:15.4px;color:#3c3c3c;text-rendering:geometricPrecision;right:1650.8px;">77160</div>
<div class="a t" style="top:321px;font-size:15.4px;color:#3c3c3c;text-rendering:geometricPrecision;right:1500.8px;">89</div>
<div class="a t" style="top:321px;font-size:15.4px;color:#3c3c3c;text-rendering:geometricPrecision;right:1350.8px;">58</div>
<svg class="a" style="left:1233.5px;top:318.15px;" width="17" height="17" viewBox="0 0 17 17"><circle cx="8.5" cy="8.5" r="8.4" fill="#d6ecd8"/><path d="M8.5,4 V13 M4,8.5 H13" stroke="#fff" stroke-width="2"/></svg>
<div class="a" style="left:1273.5px;top:320px;width:82.9px;height:22.48px;overflow:hidden"><div class="a t" style="font-size:15.4px;color:#3c3c3c;left:0;top:2px;text-rendering:geometricPrecision;">23.07.2022 09:41</div></div>
<div class="a t" style="top:321px;font-size:15.4px;color:#3c3c3c;text-rendering:geometricPrecision;right:1055.7px;">937,20</div>
<div class="a t" style="top:321px;font-size:15.4px;color:#3c3c3c;text-rendering:geometricPrecision;right:905.7px;">44,60</div>
<div class="a t" style="top:321px;font-size:15.4px;color:#3c3c3c;text-rendering:geometricPrecision;right:755.7px;">7,13</div>
<div class="a" style="left:1910.4px;top:319px;width:31.6px;height:22.48px;overflow:hidden"><div class="a t" style="font-size:15.4px;color:#3c3c3c;left:0;top:2px;text-rendering:geometricPrecision;">50853</div></div>
<div class="a" style="left:5px;top:368px;width:56px;height:1px;background:#e2e2e2;"></div>
<div class="a t" style="top:350px;font-size:15.4px;color:#3c3c3c;text-rendering:geometricPrecision;left:20.4px;">8</div>
<div class="a" style="left:95px;top:347px;width:17px;height:17px;background:#fff;border:1px solid #666;"></div>
<div class="a t" style="top:349px;font-size:15.5px;color:#444;letter-spacing:0.51px;left:141.5px;">купить дом +в пригороде анапы</div>
<svg class="a" style="left:725.1px;top:347.22px;" width="11.8" height="15" viewBox="0 0 11.8 15"><path d="M2.6,6.4 V4.2 A3.3,3.3 0 0 1 9.2,4.2 V6.4" fill="none" stroke="#e4e4e4" stroke-width="1.5"/><rect x="0.8" y="6.4" width="10.2" height="7.8" rx="0.8" fill="#fbfbfb" stroke="#e4e4e4" stroke-width="1.5"/><circle cx="5.9" cy="10.3" r="1" fill="#dcdcdc"/></svg>
<svg class="a" style="left:742.4px;top:346.02px;" width="15.4" height="17.6" viewBox="0 0 15.4 17.6"><path d="M7.7,0 C5.2,1.6 2.7,2.1 0.4,2.3 C0.2,8.2 1.6,13.6 7.7,17.5 C13.8,13.6 15.2,8.2 15,2.3 C12.7,2.1 10.2,1.6 7.7,0 Z" fill="#eef5fc"/></svg>
<div class="a t" style="top:349px;font-size:15.4px;color:#3c3c3c;text-rendering:geometricPrecision;right:1650.8px;">175</div>
<div class="a t" style="top:349px;font-size:15.4px;color:#3c3c3c;text-rendering:geometricPrecision;right:1500.8px;">51</div>
<div class="a t" style="top:349px;font-size:15.4px;color:#3c3c3c;text-rendering:geometricPrecision;right:1350.8px;">47</div>
<svg class="a" style="left:1233.9px;top:349.32px;" width="16.2" height="15" viewBox="0 0 16.2 15"><rect x="0" y="5.6" width="2.4" height="9.2" fill="#ff8585"/><rect x="3.4" y="4.6" width="2.4" height="10.2" fill="#ff8585"/><rect x="6.8" y="6.7" width="2.4" height="8.1" fill="#ff8585"/><rect x="10.2" y="3.6" width="2.4" height="11.2" fill="#ff8585"/><rect x="13.6" y="0" width="2.4" height="14.8" fill="#ff8585"/></svg>
<div class="a" style="left:1273.5px;top:348px;width:82.9px;height:22.48px;overflow:hidden"><div class="a t" style="font-size:15.4px;color:#3c3c3c;left:0;top:2px;text-rendering:geometricPrecision;">23.07.2022 09:41</div></div>
<div class="a" style="left:5px;top:396px;width:56px;height:1px;background:#e2e2e2;"></div>
<div class="a t" style="top:378px;font-size:15.4px;color:#3c3c3c;text-rendering:geometricPrecision;left:20.4px;">9</div>
<div class="a" style="left:95px;top:374px;width:17px;height:17px;background:#fff;border:1px solid #666;"></div>
<div class="a t" style="top:377px;font-size:15.5px;color:#444;letter-spacing:0.26px;left:141.5px;">строй дом анапа</div>
<svg class="a" style="left:725.1px;top:375.1px;" width="11.8" height="15" viewBox="0 0 11.8 15"><path d="M2.6,6.4 V4.2 A3.3,3.3 0 0 1 9.2,4.2 V6.4" fill="none" stroke="#e4e4e4" stroke-width="1.5"/><rect x="0.8" y="6.4" width="10.2" height="7.8" rx="0.8" fill="#fbfbfb" stroke="#e4e4e4" stroke-width="1.5"/><circle cx="5.9" cy="10.3" r="1" fill="#dcdcdc"/></svg>
<svg class="a" style="left:742.4px;top:373.9px;" width="15.4" height="17.6" viewBox="0 0 15.4 17.6"><path d="M7.7,0 C5.2,1.6 2.7,2.1 0.4,2.3 C0.2,8.2 1.6,13.6 7.7,17.5 C13.8,13.6 15.2,8.2 15,2.3 C12.7,2.1 10.2,1.6 7.7,0 Z" fill="#eef5fc"/></svg>
<div class="a t" style="top:377px;font-size:15.4px;color:#3c3c3c;text-rendering:geometricPrecision;right:1650.8px;">176</div>
<div class="a t" style="top:377px;font-size:15.4px;color:#3c3c3c;text-rendering:geometricPrecision;right:1500.8px;">44</div>
<div class="a t" style="top:377px;font-size:15.4px;color:#3c3c3c;text-rendering:geometricPrecision;right:1350.8px;">35</div>
<svg class="a" style="left:1233.9px;top:377.2px;" width="16.2" height="15" viewBox="0 0 16.2 15"><rect x="0" y="5.6" width="2.4" height="9.2" fill="#ff8585"/><rect x="3.4" y="4.6" width="2.4" height="10.2" fill="#ff8585"/><rect x="6.8" y="6.7" width="2.4" height="8.1" fill="#ff8585"/><rect x="10.2" y="3.6" width="2.4" height="11.2" fill="#ff8585"/><rect x="13.6" y="0" width="2.4" height="14.8" fill="#ff8585"/></svg>
<div class="a" style="left:1273.5px;top:376px;width:82.9px;height:22.48px;overflow:hidden"><div class="a t" style="font-size:15.4px;color:#3c3c3c;left:0;top:2px;text-rendering:geometricPrecision;">23.07.2022 09:41</div></div>
<div class="a" style="left:5px;top:424px;width:56px;height:1px;background:#e2e2e2;"></div>
<div class="a t" style="top:406px;font-size:15.4px;color:#3c3c3c;text-rendering:geometricPrecision;left:20.4px;">10</div>
<div class="a" style="left:95px;top:402px;width:17px;height:17px;background:#fff;border:1px solid #666;"></div>
<div class="a t" style="top:405px;font-size:15.5px;color:#444;letter-spacing:0.45px;left:141.5px;">купить дом +в районе анапы</div>
<svg class="a" style="left:725.1px;top:402.97px;" width="11.8" height="15" viewBox="0 0 11.8 15"><path d="M2.6,6.4 V4.2 A3.3,3.3 0 0 1 9.2,4.2 V6.4" fill="none" stroke="#e4e4e4" stroke-width="1.5"/><rect x="0.8" y="6.4" width="10.2" height="7.8" rx="0.8" fill="#fbfbfb" stroke="#e4e4e4" stroke-width="1.5"/><circle cx="5.9" cy="10.3" r="1" fill="#dcdcdc"/></svg>
<svg class="a" style="left:742.4px;top:401.77px;" width="15.4" height="17.6" viewBox="0 0 15.4 17.6"><path d="M7.7,0 C5.2,1.6 2.7,2.1 0.4,2.3 C0.2,8.2 1.6,13.6 7.7,17.5 C13.8,13.6 15.2,8.2 15,2.3 C12.7,2.1 10.2,1.6 7.7,0 Z" fill="#eef5fc"/></svg>
<div class="a t" style="top:405px;font-size:15.4px;color:#3c3c3c;text-rendering:geometricPrecision;right:1650.8px;">119</div>
<div class="a t" style="top:405px;font-size:15.4px;color:#3c3c3c;text-rendering:geometricPrecision;right:1500.8px;">38</div>
<div class="a t" style="top:405px;font-size:15.4px;color:#3c3c3c;text-rendering:geometricPrecision;right:1350.8px;">32</div>
<svg class="a" style="left:1233.9px;top:405.07px;" width="16.2" height="15" viewBox="0 0 16.2 15"><rect x="0" y="5.6" width="2.4" height="9.2" fill="#ff8585"/><rect x="3.4" y="4.6" width="2.4" height="10.2" fill="#ff8585"/><rect x="6.8" y="6.7" width="2.4" height="8.1" fill="#ff8585"/><rect x="10.2" y="3.6" width="2.4" height="11.2" fill="#ff8585"/><rect x="13.6" y="0" width="2.4" height="14.8" fill="#ff8585"/></svg>
<div class="a" style="left:1273.5px;top:404px;width:82.9px;height:22.48px;overflow:hidden"><div class="a t" style="font-size:15.4px;color:#3c3c3c;left:0;top:2px;text-rendering:geometricPrecision;">23.07.2022 09:41</div></div>
<div class="a" style="left:5px;top:452px;width:56px;height:1px;background:#e2e2e2;"></div>
<div class="a t" style="top:434px;font-size:15.4px;color:#3c3c3c;text-rendering:geometricPrecision;left:20.4px;">11</div>
<div class="a" style="left:95px;top:430px;width:17px;height:17px;background:#fff;border:1px solid #666;"></div>
<div class="a t" style="top:433px;font-size:15.5px;color:#444;letter-spacing:0.37px;left:141.5px;">купить дом недалеко +от анапы</div>
<svg class="a" style="left:725.1px;top:430.85px;" width="11.8" height="15" viewBox="0 0 11.8 15"><path d="M2.6,6.4 V4.2 A3.3,3.3 0 0 1 9.2,4.2 V6.4" fill="none" stroke="#e4e4e4" stroke-width="1.5"/><rect x="0.8" y="6.4" width="10.2" height="7.8" rx="0.8" fill="#fbfbfb" stroke="#e4e4e4" stroke-width="1.5"/><circle cx="5.9" cy="10.3" r="1" fill="#dcdcdc"/></svg>
<svg class="a" style="left:742.4px;top:429.65px;" width="15.4" height="17.6" viewBox="0 0 15.4 17.6"><path d="M7.7,0 C5.2,1.6 2.7,2.1 0.4,2.3 C0.2,8.2 1.6,13.6 7.7,17.5 C13.8,13.6 15.2,8.2 15,2.3 C12.7,2.1 10.2,1.6 7.7,0 Z" fill="#eef5fc"/></svg>
<div class="a t" style="top:432px;font-size:15.4px;color:#3c3c3c;text-rendering:geometricPrecision;right:1650.8px;">639</div>
<div class="a t" style="top:432px;font-size:15.4px;color:#3c3c3c;text-rendering:geometricPrecision;right:1500.8px;">29</div>
<div class="a t" style="top:432px;font-size:15.4px;color:#3c3c3c;text-rendering:geometricPrecision;right:1350.8px;">29</div>
<svg class="a" style="left:1233.9px;top:432.95px;" width="16.2" height="15" viewBox="0 0 16.2 15"><rect x="0" y="5.6" width="2.4" height="9.2" fill="#ff8585"/><rect x="3.4" y="4.6" width="2.4" height="10.2" fill="#ff8585"/><rect x="6.8" y="6.7" width="2.4" height="8.1" fill="#ff8585"/><rect x="10.2" y="3.6" width="2.4" height="11.2" fill="#ff8585"/><rect x="13.6" y="0" width="2.4" height="14.8" fill="#ff8585"/></svg>
<div class="a" style="left:1273.5px;top:432px;width:82.9px;height:22.48px;overflow:hidden"><div class="a t" style="font-size:15.4px;color:#3c3c3c;left:0;top:2px;text-rendering:geometricPrecision;">23.07.2022 09:41</div></div>
<div class="a" style="left:5px;top:479px;width:56px;height:1px;background:#e2e2e2;"></div>
<div class="a t" style="top:461px;font-size:15.4px;color:#3c3c3c;text-rendering:geometricPrecision;left:20.4px;">12</div>
<div class="a" style="left:95px;top:458px;width:17px;height:17px;background:#fff;border:1px solid #666;"></div>
<div class="a t" style="top:460px;font-size:15.5px;color:#444;letter-spacing:0.46px;left:141.5px;">продам дом +в анапе</div>
<svg class="a" style="left:725.1px;top:458.72px;" width="11.8" height="15" viewBox="0 0 11.8 15"><path d="M2.6,6.4 V4.2 A3.3,3.3 0 0 1 9.2,4.2 V6.4" fill="none" stroke="#e4e4e4" stroke-width="1.5"/><rect x="0.8" y="6.4" width="10.2" height="7.8" rx="0.8" fill="#fbfbfb" stroke="#e4e4e4" stroke-width="1.5"/><circle cx="5.9" cy="10.3" r="1" fill="#dcdcdc"/></svg>
<svg class="a" style="left:742.4px;top:457.52px;" width="15.4" height="17.6" viewBox="0 0 15.4 17.6"><path d="M7.7,0 C5.2,1.6 2.7,2.1 0.4,2.3 C0.2,8.2 1.6,13.6 7.7,17.5 C13.8,13.6 15.2,8.2 15,2.3 C12.7,2.1 10.2,1.6 7.7,0 Z" fill="#eef5fc"/></svg>
<div class="a t" style="top:460px;font-size:15.4px;color:#3c3c3c;text-rendering:geometricPrecision;right:1650.8px;">92</div>
<div class="a t" style="top:460px;font-size:15.4px;color:#3c3c3c;text-rendering:geometricPrecision;right:1500.8px;">33</div>
<div class="a t" style="top:460px;font-size:15.4px;color:#3c3c3c;text-rendering:geometricPrecision;right:1350.8px;">28</div>
<svg class="a" style="left:1233.9px;top:460.82px;" width="16.2" height="15" viewBox="0 0 16.2 15"><rect x="0" y="5.6" width="2.4" height="9.2" fill="#ff8585"/><rect x="3.4" y="4.6" width="2.4" height="10.2" fill="#ff8585"/><rect x="6.8" y="6.7" width="2.4" height="8.1" fill="#ff8585"/><rect x="10.2" y="3.6" width="2.4" height="11.2" fill="#ff8585"/><rect x="13.6" y="0" width="2.4" height="14.8" fill="#ff8585"/></svg>
<div class="a" style="left:1273.5px;top:459px;width:82.9px;height:22.48px;overflow:hidden"><div class="a t" style="font-size:15.4px;color:#3c3c3c;left:0;top:2px;text-rendering:geometricPrecision;">23.07.2022 </div></div>
<div class="a" style="left:5px;top:507px;width:56px;height:1px;background:#e2e2e2;"></div>
<div class="a t" style="top:489px;font-size:15.4px;color:#3c3c3c;text-rendering:geometricPrecision;left:20.4px;">13</div>
<div class="a" style="left:95px;top:486px;width:17px;height:17px;background:#fff;border:1px solid #666;"></div>
<div class="a t" style="top:488px;font-size:15.5px;color:#444;letter-spacing:0.44px;left:141.5px;">купить дом под анапой</div>
<svg class="a" style="left:725.1px;top:486.6px;" width="11.8" height="15" viewBox="0 0 11.8 15"><path d="M2.6,6.4 V4.2 A3.3,3.3 0 0 1 9.2,4.2 V6.4" fill="none" stroke="#e4e4e4" stroke-width="1.5"/><rect x="0.8" y="6.4" width="10.2" height="7.8" rx="0.8" fill="#fbfbfb" stroke="#e4e4e4" stroke-width="1.5"/><circle cx="5.9" cy="10.3" r="1" fill="#dcdcdc"/></svg>
<svg class="a" style="left:742.4px;top:485.4px;" width="15.4" height="17.6" viewBox="0 0 15.4 17.6"><path d="M7.7,0 C5.2,1.6 2.7,2.1 0.4,2.3 C0.2,8.2 1.6,13.6 7.7,17.5 C13.8,13.6 15.2,8.2 15,2.3 C12.7,2.1 10.2,1.6 7.7,0 Z" fill="#eef5fc"/></svg>
<div class="a t" style="top:488px;font-size:15.4px;color:#3c3c3c;text-rendering:geometricPrecision;right:1650.8px;">151</div>
<div class="a t" style="top:488px;font-size:15.4px;color:#3c3c3c;text-rendering:geometricPrecision;right:1500.8px;">34</div>
<div class="a t" style="top:488px;font-size:15.4px;color:#3c3c3c;text-rendering:geometricPrecision;right:1350.8px;">27</div>
<svg class="a" style="left:1233.9px;top:488.7px;" width="16.2" height="15" viewBox="0 0 16.2 15"><rect x="0" y="5.6" width="2.4" height="9.2" fill="#ff8585"/><rect x="3.4" y="4.6" width="2.4" height="10.2" fill="#ff8585"/><rect x="6.8" y="6.7" width="2.4" height="8.1" fill="#ff8585"/><rect x="10.2" y="3.6" width="2.4" height="11.2" fill="#ff8585"/><rect x="13.6" y="0" width="2.4" height="14.8" fill="#ff8585"/></svg>
<div class="a" style="left:1273.5px;top:487px;width:82.9px;height:22.48px;overflow:hidden"><div class="a t" style="font-size:15.4px;color:#3c3c3c;left:0;top:2px;text-rendering:geometricPrecision;">23.07.2022 09:41</div></div>
<div class="a" style="left:5px;top:535px;width:56px;height:1px;background:#e2e2e2;"></div>
<div class="a t" style="top:517px;font-size:15.4px;color:#3c3c3c;text-rendering:geometricPrecision;left:20.4px;">14</div>
<div class="a" style="left:95px;top:514px;width:17px;height:17px;background:#fff;border:1px solid #666;"></div>
<div class="a t" style="top:516px;font-size:15.5px;color:#444;letter-spacing:0.42px;left:141.5px;">коттеджный поселок загород анапа купить дом</div>
<svg class="a" style="left:725.1px;top:514.48px;" width="11.8" height="15" viewBox="0 0 11.8 15"><path d="M2.6,6.4 V4.2 A3.3,3.3 0 0 1 9.2,4.2 V6.4" fill="none" stroke="#e4e4e4" stroke-width="1.5"/><rect x="0.8" y="6.4" width="10.2" height="7.8" rx="0.8" fill="#fbfbfb" stroke="#e4e4e4" stroke-width="1.5"/><circle cx="5.9" cy="10.3" r="1" fill="#dcdcdc"/></svg>
<svg class="a" style="left:742.4px;top:513.27px;" width="15.4" height="17.6" viewBox="0 0 15.4 17.6"><path d="M7.7,0 C5.2,1.6 2.7,2.1 0.4,2.3 C0.2,8.2 1.6,13.6 7.7,17.5 C13.8,13.6 15.2,8.2 15,2.3 C12.7,2.1 10.2,1.6 7.7,0 Z" fill="#eef5fc"/></svg>
<div class="a t" style="top:516px;font-size:15.4px;color:#3c3c3c;text-rendering:geometricPrecision;right:1650.8px;">22</div>
<div class="a t" style="top:516px;font-size:15.4px;color:#3c3c3c;text-rendering:geometricPrecision;right:1500.8px;">22</div>
<div class="a t" style="top:516px;font-size:15.4px;color:#3c3c3c;text-rendering:geometricPrecision;right:1350.8px;">22</div>
<svg class="a" style="left:1233.9px;top:516.57px;" width="16.2" height="15" viewBox="0 0 16.2 15"><rect x="0" y="5.6" width="2.4" height="9.2" fill="#ff8585"/><rect x="3.4" y="4.6" width="2.4" height="10.2" fill="#ff8585"/><rect x="6.8" y="6.7" width="2.4" height="8.1" fill="#ff8585"/><rect x="10.2" y="3.6" width="2.4" height="11.2" fill="#ff8585"/><rect x="13.6" y="0" width="2.4" height="14.8" fill="#ff8585"/></svg>
<div class="a" style="left:1273.5px;top:515px;width:82.9px;height:22.48px;overflow:hidden"><div class="a t" style="font-size:15.4px;color:#3c3c3c;left:0;top:2px;text-rendering:geometricPrecision;">23.07.2022 </div></div>
<div class="a" style="left:5px;top:563px;width:56px;height:1px;background:#e2e2e2;"></div>
<div class="a t" style="top:545px;font-size:15.4px;color:#3c3c3c;text-rendering:geometricPrecision;left:20.4px;">15</div>
<div class="a" style="left:95px;top:542px;width:17px;height:17px;background:#fff;border:1px solid #666;"></div>
<div class="a t" style="top:544px;font-size:15.5px;color:#444;letter-spacing:0.52px;left:141.5px;">продажа домов +в анапе недорого</div>
<svg class="a" style="left:725.1px;top:542.35px;" width="11.8" height="15" viewBox="0 0 11.8 15"><path d="M2.6,6.4 V4.2 A3.3,3.3 0 0 1 9.2,4.2 V6.4" fill="none" stroke="#e4e4e4" stroke-width="1.5"/><rect x="0.8" y="6.4" width="10.2" height="7.8" rx="0.8" fill="#fbfbfb" stroke="#e4e4e4" stroke-width="1.5"/><circle cx="5.9" cy="10.3" r="1" fill="#dcdcdc"/></svg>
<svg class="a" style="left:742.4px;top:541.15px;" width="15.4" height="17.6" viewBox="0 0 15.4 17.6"><path d="M7.7,0 C5.2,1.6 2.7,2.1 0.4,2.3 C0.2,8.2 1.6,13.6 7.7,17.5 C13.8,13.6 15.2,8.2 15,2.3 C12.7,2.1 10.2,1.6 7.7,0 Z" fill="#eef5fc"/></svg>
<div class="a t" style="top:544px;font-size:15.4px;color:#3c3c3c;text-rendering:geometricPrecision;right:1650.8px;">90</div>
<div class="a t" style="top:544px;font-size:15.4px;color:#3c3c3c;text-rendering:geometricPrecision;right:1500.8px;">19</div>
<div class="a t" style="top:544px;font-size:15.4px;color:#3c3c3c;text-rendering:geometricPrecision;right:1350.8px;">19</div>
<svg class="a" style="left:1233.9px;top:544.45px;" width="16.2" height="15" viewBox="0 0 16.2 15"><rect x="0" y="5.6" width="2.4" height="9.2" fill="#ff8585"/><rect x="3.4" y="4.6" width="2.4" height="10.2" fill="#ff8585"/><rect x="6.8" y="6.7" width="2.4" height="8.1" fill="#ff8585"/><rect x="10.2" y="3.6" width="2.4" height="11.2" fill="#ff8585"/><rect x="13.6" y="0" width="2.4" height="14.8" fill="#ff8585"/></svg>
<div class="a" style="left:1273.5px;top:543px;width:82.9px;height:22.48px;overflow:hidden"><div class="a t" style="font-size:15.4px;color:#3c3c3c;left:0;top:2px;text-rendering:geometricPrecision;">23.07.2022 </div></div>
<div class="a" style="left:5px;top:591px;width:56px;height:1px;background:#e2e2e2;"></div>
<div class="a t" style="top:573px;font-size:15.4px;color:#3c3c3c;text-rendering:geometricPrecision;left:20.4px;">16</div>
<div class="a" style="left:95px;top:570px;width:17px;height:17px;background:#fff;border:1px solid #666;"></div>
<div class="a t" style="top:572px;font-size:15.5px;color:#444;letter-spacing:0.37px;left:141.5px;">купить частный дом +в анапе</div>
<svg class="a" style="left:725.1px;top:570.23px;" width="11.8" height="15" viewBox="0 0 11.8 15"><path d="M2.6,6.4 V4.2 A3.3,3.3 0 0 1 9.2,4.2 V6.4" fill="none" stroke="#e4e4e4" stroke-width="1.5"/><rect x="0.8" y="6.4" width="10.2" height="7.8" rx="0.8" fill="#fbfbfb" stroke="#e4e4e4" stroke-width="1.5"/><circle cx="5.9" cy="10.3" r="1" fill="#dcdcdc"/></svg>
<svg class="a" style="left:742.4px;top:569.02px;" width="15.4" height="17.6" viewBox="0 0 15.4 17.6"><path d="M7.7,0 C5.2,1.6 2.7,2.1 0.4,2.3 C0.2,8.2 1.6,13.6 7.7,17.5 C13.8,13.6 15.2,8.2 15,2.3 C12.7,2.1 10.2,1.6 7.7,0 Z" fill="#eef5fc"/></svg>
<div class="a t" style="top:572px;font-size:15.4px;color:#3c3c3c;text-rendering:geometricPrecision;right:1650.8px;">234</div>
<div class="a t" style="top:572px;font-size:15.4px;color:#3c3c3c;text-rendering:geometricPrecision;right:1500.8px;">20</div>
<div class="a t" style="top:572px;font-size:15.4px;color:#3c3c3c;text-rendering:geometricPrecision;right:1350.8px;">17</div>
<svg class="a" style="left:1233.9px;top:572.32px;" width="16.2" height="15" viewBox="0 0 16.2 15"><rect x="0" y="5.6" width="2.4" height="9.2" fill="#ff8585"/><rect x="3.4" y="4.6" width="2.4" height="10.2" fill="#ff8585"/><rect x="6.8" y="6.7" width="2.4" height="8.1" fill="#ff8585"/><rect x="10.2" y="3.6" width="2.4" height="11.2" fill="#ff8585"/><rect x="13.6" y="0" width="2.4" height="14.8" fill="#ff8585"/></svg>
<div class="a" style="left:1273.5px;top:571px;width:82.9px;height:22.48px;overflow:hidden"><div class="a t" style="font-size:15.4px;color:#3c3c3c;left:0;top:2px;text-rendering:geometricPrecision;">23.07.2022 09:41</div></div>
<div class="a" style="left:5px;top:619px;width:56px;height:1px;background:#e2e2e2;"></div>
<div class="a t" style="top:601px;font-size:15.4px;color:#3c3c3c;text-rendering:geometricPrecision;left:20.4px;">17</div>
<div class="a" style="left:95px;top:597px;width:17px;height:17px;background:#fff;border:1px solid #666;"></div>
<div class="a t" style="top:600px;font-size:15.5px;color:#444;letter-spacing:0.24px;left:141.5px;">строй дом анапа официальный сайт</div>
<svg class="a" style="left:725.1px;top:598.1px;" width="11.8" height="15" viewBox="0 0 11.8 15"><path d="M2.6,6.4 V4.2 A3.3,3.3 0 0 1 9.2,4.2 V6.4" fill="none" stroke="#e4e4e4" stroke-width="1.5"/><rect x="0.8" y="6.4" width="10.2" height="7.8" rx="0.8" fill="#fbfbfb" stroke="#e4e4e4" stroke-width="1.5"/><circle cx="5.9" cy="10.3" r="1" fill="#dcdcdc"/></svg>
<svg class="a" style="left:742.4px;top:596.9px;" width="15.4" height="17.6" viewBox="0 0 15.4 17.6"><path d="M7.7,0 C5.2,1.6 2.7,2.1 0.4,2.3 C0.2,8.2 1.6,13.6 7.7,17.5 C13.8,13.6 15.2,8.2 15,2.3 C12.7,2.1 10.2,1.6 7.7,0 Z" fill="#eef5fc"/></svg>
<div class="a t" style="top:600px;font-size:15.4px;color:#3c3c3c;text-rendering:geometricPrecision;right:1650.8px;">35</div>
<div class="a t" style="top:600px;font-size:15.4px;color:#3c3c3c;text-rendering:geometricPrecision;right:1500.8px;">14</div>
<div class="a t" style="top:600px;font-size:15.4px;color:#3c3c3c;text-rendering:geometricPrecision;right:1350.8px;">14</div>
<svg class="a" style="left:1233.9px;top:600.2px;" width="16.2" height="15" viewBox="0 0 16.2 15"><rect x="0" y="5.6" width="2.4" height="9.2" fill="#ff8585"/><rect x="3.4" y="4.6" width="2.4" height="10.2" fill="#ff8585"/><rect x="6.8" y="6.7" width="2.4" height="8.1" fill="#ff8585"/><rect x="10.2" y="3.6" width="2.4" height="11.2" fill="#ff8585"/><rect x="13.6" y="0" width="2.4" height="14.8" fill="#ff8585"/></svg>
<div class="a" style="left:1273.5px;top:599px;width:82.9px;height:22.48px;overflow:hidden"><div class="a t" style="font-size:15.4px;color:#3c3c3c;left:0;top:2px;text-rendering:geometricPrecision;">23.07.2022 19:41</div></div>
<div class="a" style="left:5px;top:647px;width:56px;height:1px;background:#e2e2e2;"></div>
<div class="a t" style="top:628px;font-size:15.4px;color:#3c3c3c;text-rendering:geometricPrecision;left:20.4px;">18</div>
<div class="a" style="left:95px;top:625px;width:17px;height:17px;background:#fff;border:1px solid #666;"></div>
<div class="a t" style="top:627px;font-size:15.5px;color:#444;letter-spacing:0.44px;left:141.5px;">купить дом рядом +с анапой</div>
<svg class="a" style="left:725.1px;top:625.98px;" width="11.8" height="15" viewBox="0 0 11.8 15"><path d="M2.6,6.4 V4.2 A3.3,3.3 0 0 1 9.2,4.2 V6.4" fill="none" stroke="#e4e4e4" stroke-width="1.5"/><rect x="0.8" y="6.4" width="10.2" height="7.8" rx="0.8" fill="#fbfbfb" stroke="#e4e4e4" stroke-width="1.5"/><circle cx="5.9" cy="10.3" r="1" fill="#dcdcdc"/></svg>
<svg class="a" style="left:742.4px;top:624.77px;" width="15.4" height="17.6" viewBox="0 0 15.4 17.6"><path d="M7.7,0 C5.2,1.6 2.7,2.1 0.4,2.3 C0.2,8.2 1.6,13.6 7.7,17.5 C13.8,13.6 15.2,8.2 15,2.3 C12.7,2.1 10.2,1.6 7.7,0 Z" fill="#eef5fc"/></svg>
<div class="a t" style="top:627px;font-size:15.4px;color:#3c3c3c;text-rendering:geometricPrecision;right:1650.8px;">64</div>
<div class="a t" style="top:627px;font-size:15.4px;color:#3c3c3c;text-rendering:geometricPrecision;right:1500.8px;">11</div>
<div class="a t" style="top:627px;font-size:15.4px;color:#3c3c3c;text-rendering:geometricPrecision;right:1350.8px;">11</div>
<svg class="a" style="left:1233.9px;top:628.07px;" width="16.2" height="15" viewBox="0 0 16.2 15"><rect x="0" y="5.6" width="2.4" height="9.2" fill="#ff8585"/><rect x="3.4" y="4.6" width="2.4" height="10.2" fill="#ff8585"/><rect x="6.8" y="6.7" width="2.4" height="8.1" fill="#ff8585"/><rect x="10.2" y="3.6" width="2.4" height="11.2" fill="#ff8585"/><rect x="13.6" y="0" width="2.4" height="14.8" fill="#ff8585"/></svg>
<div class="a" style="left:1273.5px;top:626px;width:82.9px;height:22.48px;overflow:hidden"><div class="a t" style="font-size:15.4px;color:#3c3c3c;left:0;top:2px;text-rendering:geometricPrecision;">23.07.2022 </div></div>
<div class="a" style="left:5px;top:674px;width:56px;height:1px;background:#e2e2e2;"></div>
<div class="a t" style="top:656px;font-size:15.4px;color:#3c3c3c;text-rendering:geometricPrecision;left:20.4px;">19</div>
<div class="a" style="left:95px;top:653px;width:17px;height:17px;background:#fff;border:1px solid #666;"></div>
<div class="a t" style="top:655px;font-size:15.5px;color:#444;letter-spacing:0.38px;left:141.5px;">сколько стоит дом +в анапе</div>
<svg class="a" style="left:725.1px;top:653.85px;" width="11.8" height="15" viewBox="0 0 11.8 15"><path d="M2.6,6.4 V4.2 A3.3,3.3 0 0 1 9.2,4.2 V6.4" fill="none" stroke="#e4e4e4" stroke-width="1.5"/><rect x="0.8" y="6.4" width="10.2" height="7.8" rx="0.8" fill="#fbfbfb" stroke="#e4e4e4" stroke-width="1.5"/><circle cx="5.9" cy="10.3" r="1" fill="#dcdcdc"/></svg>
<svg class="a" style="left:742.4px;top:652.65px;" width="15.4" height="17.6" viewBox="0 0 15.4 17.6"><path d="M7.7,0 C5.2,1.6 2.7,2.1 0.4,2.3 C0.2,8.2 1.6,13.6 7.7,17.5 C13.8,13.6 15.2,8.2 15,2.3 C12.7,2.1 10.2,1.6 7.7,0 Z" fill="#eef5fc"/></svg>
<div class="a t" style="top:655px;font-size:15.4px;color:#3c3c3c;text-rendering:geometricPrecision;right:1650.8px;">178</div>
<div class="a t" style="top:655px;font-size:15.4px;color:#3c3c3c;text-rendering:geometricPrecision;right:1500.8px;">14</div>
<div class="a t" style="top:655px;font-size:15.4px;color:#3c3c3c;text-rendering:geometricPrecision;right:1350.8px;">9</div>
<svg class="a" style="left:1233.9px;top:655.95px;" width="16.2" height="15" viewBox="0 0 16.2 15"><rect x="0" y="5.6" width="2.4" height="9.2" fill="#ff8585"/><rect x="3.4" y="4.6" width="2.4" height="10.2" fill="#ff8585"/><rect x="6.8" y="6.7" width="2.4" height="8.1" fill="#ff8585"/><rect x="10.2" y="3.6" width="2.4" height="11.2" fill="#ff8585"/><rect x="13.6" y="0" width="2.4" height="14.8" fill="#ff8585"/></svg>
<div class="a" style="left:1273.5px;top:654px;width:82.9px;height:22.48px;overflow:hidden"><div class="a t" style="font-size:15.4px;color:#3c3c3c;left:0;top:2px;text-rendering:geometricPrecision;">23.07.2022 09:41</div></div>
<div class="a" style="left:5px;top:702px;width:56px;height:1px;background:#e2e2e2;"></div>
<div class="a t" style="top:684px;font-size:15.4px;color:#3c3c3c;text-rendering:geometricPrecision;left:20.4px;">20</div>
<div class="a" style="left:95px;top:681px;width:17px;height:17px;background:#fff;border:1px solid #666;"></div>
<div class="a t" style="top:683px;font-size:15.5px;color:#444;letter-spacing:0.54px;left:141.5px;">купить дом +в пригороде анапы недорого</div>
<svg class="a" style="left:725.1px;top:681.73px;" width="11.8" height="15" viewBox="0 0 11.8 15"><path d="M2.6,6.4 V4.2 A3.3,3.3 0 0 1 9.2,4.2 V6.4" fill="none" stroke="#e4e4e4" stroke-width="1.5"/><rect x="0.8" y="6.4" width="10.2" height="7.8" rx="0.8" fill="#fbfbfb" stroke="#e4e4e4" stroke-width="1.5"/><circle cx="5.9" cy="10.3" r="1" fill="#dcdcdc"/></svg>
<svg class="a" style="left:742.4px;top:680.52px;" width="15.4" height="17.6" viewBox="0 0 15.4 17.6"><path d="M7.7,0 C5.2,1.6 2.7,2.1 0.4,2.3 C0.2,8.2 1.6,13.6 7.7,17.5 C13.8,13.6 15.2,8.2 15,2.3 C12.7,2.1 10.2,1.6 7.7,0 Z" fill="#eef5fc"/></svg>
<div class="a t" style="top:683px;font-size:15.4px;color:#3c3c3c;text-rendering:geometricPrecision;right:1650.8px;">61</div>
<div class="a t" style="top:683px;font-size:15.4px;color:#3c3c3c;text-rendering:geometricPrecision;right:1500.8px;">9</div>
<div class="a t" style="top:683px;font-size:15.4px;color:#3c3c3c;text-rendering:geometricPrecision;right:1350.8px;">9</div>
<svg class="a" style="left:1233.9px;top:683.82px;" width="16.2" height="15" viewBox="0 0 16.2 15"><rect x="0" y="5.6" width="2.4" height="9.2" fill="#ff8585"/><rect x="3.4" y="4.6" width="2.4" height="10.2" fill="#ff8585"/><rect x="6.8" y="6.7" width="2.4" height="8.1" fill="#ff8585"/><rect x="10.2" y="3.6" width="2.4" height="11.2" fill="#ff8585"/><rect x="13.6" y="0" width="2.4" height="14.8" fill="#ff8585"/></svg>
<div class="a" style="left:1273.5px;top:682px;width:82.9px;height:22.48px;overflow:hidden"><div class="a t" style="font-size:15.4px;color:#3c3c3c;left:0;top:2px;text-rendering:geometricPrecision;">23.07.2022 </div></div>
<div class="a" style="left:5px;top:730px;width:56px;height:1px;background:#e2e2e2;"></div>
<div class="a t" style="top:712px;font-size:15.4px;color:#3c3c3c;text-rendering:geometricPrecision;left:20.4px;">21</div>
<div class="a" style="left:95px;top:709px;width:17px;height:17px;background:#fff;border:1px solid #666;"></div>
<div class="a t" style="top:711px;font-size:15.5px;color:#444;letter-spacing:0.42px;left:141.5px;">модульный дом купить +в анапе</div>
<svg class="a" style="left:725.1px;top:709.6px;" width="11.8" height="15" viewBox="0 0 11.8 15"><path d="M2.6,6.4 V4.2 A3.3,3.3 0 0 1 9.2,4.2 V6.4" fill="none" stroke="#e4e4e4" stroke-width="1.5"/><rect x="0.8" y="6.4" width="10.2" height="7.8" rx="0.8" fill="#fbfbfb" stroke="#e4e4e4" stroke-width="1.5"/><circle cx="5.9" cy="10.3" r="1" fill="#dcdcdc"/></svg>
<svg class="a" style="left:742.4px;top:708.4px;" width="15.4" height="17.6" viewBox="0 0 15.4 17.6"><path d="M7.7,0 C5.2,1.6 2.7,2.1 0.4,2.3 C0.2,8.2 1.6,13.6 7.7,17.5 C13.8,13.6 15.2,8.2 15,2.3 C12.7,2.1 10.2,1.6 7.7,0 Z" fill="#eef5fc"/></svg>
<div class="a t" style="top:711px;font-size:15.4px;color:#3c3c3c;text-rendering:geometricPrecision;right:1650.8px;">14</div>
<div class="a t" style="top:711px;font-size:15.4px;color:#3c3c3c;text-rendering:geometricPrecision;right:1500.8px;">9</div>
<div class="a t" style="top:711px;font-size:15.4px;color:#3c3c3c;text-rendering:geometricPrecision;right:1350.8px;">8</div>
<svg class="a" style="left:1233.9px;top:711.7px;" width="16.2" height="15" viewBox="0 0 16.2 15"><rect x="0" y="5.6" width="2.4" height="9.2" fill="#ff8585"/><rect x="3.4" y="4.6" width="2.4" height="10.2" fill="#ff8585"/><rect x="6.8" y="6.7" width="2.4" height="8.1" fill="#ff8585"/><rect x="10.2" y="3.6" width="2.4" height="11.2" fill="#ff8585"/><rect x="13.6" y="0" width="2.4" height="14.8" fill="#ff8585"/></svg>
<div class="a" style="left:1273.5px;top:710px;width:82.9px;height:22.48px;overflow:hidden"><div class="a t" style="font-size:15.4px;color:#3c3c3c;left:0;top:2px;text-rendering:geometricPrecision;">23.07.2022 </div></div>
<div class="a" style="left:5px;top:758px;width:56px;height:1px;background:#e2e2e2;"></div>
<div class="a t" style="top:740px;font-size:15.4px;color:#3c3c3c;text-rendering:geometricPrecision;left:20.4px;">22</div>
<div class="a" style="left:95px;top:737px;width:17px;height:17px;background:#fff;border:1px solid #666;"></div>
<div class="a t" style="top:739px;font-size:15.5px;color:#444;letter-spacing:0.28px;left:141.5px;">частные дома +в анапе</div>
<svg class="a" style="left:725.1px;top:737.48px;" width="11.8" height="15" viewBox="0 0 11.8 15"><path d="M2.6,6.4 V4.2 A3.3,3.3 0 0 1 9.2,4.2 V6.4" fill="none" stroke="#e4e4e4" stroke-width="1.5"/><rect x="0.8" y="6.4" width="10.2" height="7.8" rx="0.8" fill="#fbfbfb" stroke="#e4e4e4" stroke-width="1.5"/><circle cx="5.9" cy="10.3" r="1" fill="#dcdcdc"/></svg>
<svg class="a" style="left:742.4px;top:736.27px;" width="15.4" height="17.6" viewBox="0 0 15.4 17.6"><path d="M7.7,0 C5.2,1.6 2.7,2.1 0.4,2.3 C0.2,8.2 1.6,13.6 7.7,17.5 C13.8,13.6 15.2,8.2 15,2.3 C12.7,2.1 10.2,1.6 7.7,0 Z" fill="#eef5fc"/></svg>
<div class="a t" style="top:739px;font-size:15.4px;color:#3c3c3c;text-rendering:geometricPrecision;right:1650.8px;">979</div>
<div class="a t" style="top:739px;font-size:15.4px;color:#3c3c3c;text-rendering:geometricPrecision;right:1500.8px;">14</div>
<div class="a t" style="top:739px;font-size:15.4px;color:#3c3c3c;text-rendering:geometricPrecision;right:1350.8px;">8</div>
<svg class="a" style="left:1233.9px;top:739.57px;" width="16.2" height="15" viewBox="0 0 16.2 15"><rect x="0" y="5.6" width="2.4" height="9.2" fill="#ff8585"/><rect x="3.4" y="4.6" width="2.4" height="10.2" fill="#ff8585"/><rect x="6.8" y="6.7" width="2.4" height="8.1" fill="#ff8585"/><rect x="10.2" y="3.6" width="2.4" height="11.2" fill="#ff8585"/><rect x="13.6" y="0" width="2.4" height="14.8" fill="#ff8585"/></svg>
<div class="a" style="left:1273.5px;top:738px;width:82.9px;height:22.48px;overflow:hidden"><div class="a t" style="font-size:15.4px;color:#3c3c3c;left:0;top:2px;text-rendering:geometricPrecision;">23.07.2022 19:41</div></div>
<div class="a" style="left:5px;top:786px;width:56px;height:1px;background:#e2e2e2;"></div>
<div class="a t" style="top:768px;font-size:15.4px;color:#3c3c3c;text-rendering:geometricPrecision;left:20.4px;">23</div>
<div class="a" style="left:95px;top:765px;width:17px;height:17px;background:#fff;border:1px solid #666;"></div>
<div class="a t" style="top:767px;font-size:15.5px;color:#444;letter-spacing:0.38px;left:141.5px;">дома +на юге анапа</div>
<svg class="a" style="left:725.1px;top:765.35px;" width="11.8" height="15" viewBox="0 0 11.8 15"><path d="M2.6,6.4 V4.2 A3.3,3.3 0 0 1 9.2,4.2 V6.4" fill="none" stroke="#e4e4e4" stroke-width="1.5"/><rect x="0.8" y="6.4" width="10.2" height="7.8" rx="0.8" fill="#fbfbfb" stroke="#e4e4e4" stroke-width="1.5"/><circle cx="5.9" cy="10.3" r="1" fill="#dcdcdc"/></svg>
<svg class="a" style="left:742.4px;top:764.15px;" width="15.4" height="17.6" viewBox="0 0 15.4 17.6"><path d="M7.7,0 C5.2,1.6 2.7,2.1 0.4,2.3 C0.2,8.2 1.6,13.6 7.7,17.5 C13.8,13.6 15.2,8.2 15,2.3 C12.7,2.1 10.2,1.6 7.7,0 Z" fill="#eef5fc"/></svg>
<div class="a t" style="top:767px;font-size:15.4px;color:#3c3c3c;text-rendering:geometricPrecision;right:1650.8px;">70</div>
<div class="a t" style="top:767px;font-size:15.4px;color:#3c3c3c;text-rendering:geometricPrecision;right:1500.8px;">8</div>
<div class="a t" style="top:767px;font-size:15.4px;color:#3c3c3c;text-rendering:geometricPrecision;right:1350.8px;">8</div>
<svg class="a" style="left:1233.9px;top:767.45px;" width="16.2" height="15" viewBox="0 0 16.2 15"><rect x="0" y="5.6" width="2.4" height="9.2" fill="#ff8585"/><rect x="3.4" y="4.6" width="2.4" height="10.2" fill="#ff8585"/><rect x="6.8" y="6.7" width="2.4" height="8.1" fill="#ff8585"/><rect x="10.2" y="3.6" width="2.4" height="11.2" fill="#ff8585"/><rect x="13.6" y="0" width="2.4" height="14.8" fill="#ff8585"/></svg>
<div class="a" style="left:1273.5px;top:766px;width:82.9px;height:22.48px;overflow:hidden"><div class="a t" style="font-size:15.4px;color:#3c3c3c;left:0;top:2px;text-rendering:geometricPrecision;">23.07.2022 </div></div>
<div class="a" style="left:5px;top:814px;width:56px;height:1px;background:#e2e2e2;"></div>
<div class="a t" style="top:796px;font-size:15.4px;color:#3c3c3c;text-rendering:geometricPrecision;left:20.4px;">24</div>
<div class="a" style="left:95px;top:793px;width:17px;height:17px;background:#fff;border:1px solid #666;"></div>
<div class="a t" style="top:795px;font-size:15.5px;color:#444;letter-spacing:0.37px;left:141.5px;">стоимость домов +в анапе</div>
<svg class="a" style="left:725.1px;top:793.23px;" width="11.8" height="15" viewBox="0 0 11.8 15"><path d="M2.6,6.4 V4.2 A3.3,3.3 0 0 1 9.2,4.2 V6.4" fill="none" stroke="#e4e4e4" stroke-width="1.5"/><rect x="0.8" y="6.4" width="10.2" height="7.8" rx="0.8" fill="#fbfbfb" stroke="#e4e4e4" stroke-width="1.5"/><circle cx="5.9" cy="10.3" r="1" fill="#dcdcdc"/></svg>
<svg class="a" style="left:742.4px;top:792.02px;" width="15.4" height="17.6" viewBox="0 0 15.4 17.6"><path d="M7.7,0 C5.2,1.6 2.7,2.1 0.4,2.3 C0.2,8.2 1.6,13.6 7.7,17.5 C13.8,13.6 15.2,8.2 15,2.3 C12.7,2.1 10.2,1.6 7.7,0 Z" fill="#eef5fc"/></svg>
<div class="a t" style="top:795px;font-size:15.4px;color:#3c3c3c;text-rendering:geometricPrecision;right:1650.8px;">127</div>
<div class="a t" style="top:795px;font-size:15.4px;color:#3c3c3c;text-rendering:geometricPrecision;right:1500.8px;">19</div>
<div class="a t" style="top:795px;font-size:15.4px;color:#3c3c3c;text-rendering:geometricPrecision;right:1350.8px;">7</div>
<svg class="a" style="left:1233.9px;top:795.32px;" width="16.2" height="15" viewBox="0 0 16.2 15"><rect x="0" y="5.6" width="2.4" height="9.2" fill="#ff8585"/><rect x="3.4" y="4.6" width="2.4" height="10.2" fill="#ff8585"/><rect x="6.8" y="6.7" width="2.4" height="8.1" fill="#ff8585"/><rect x="10.2" y="3.6" width="2.4" height="11.2" fill="#ff8585"/><rect x="13.6" y="0" width="2.4" height="14.8" fill="#ff8585"/></svg>
<div class="a" style="left:1273.5px;top:794px;width:82.9px;height:22.48px;overflow:hidden"><div class="a t" style="font-size:15.4px;color:#3c3c3c;left:0;top:2px;text-rendering:geometricPrecision;">23.07.2022 09:41</div></div>
<div class="a" style="left:5px;top:842px;width:56px;height:1px;background:#e2e2e2;"></div>
<div class="a t" style="top:823px;font-size:15.4px;color:#3c3c3c;text-rendering:geometricPrecision;left:20.4px;">25</div>
<div class="a" style="left:95px;top:820px;width:17px;height:17px;background:#fff;border:1px solid #666;"></div>
<div class="a t" style="top:822px;font-size:15.5px;color:#444;letter-spacing:0.43px;left:141.5px;">кп загород анапа цены +на дома</div>
<svg class="a" style="left:725.1px;top:821.1px;" width="11.8" height="15" viewBox="0 0 11.8 15"><path d="M2.6,6.4 V4.2 A3.3,3.3 0 0 1 9.2,4.2 V6.4" fill="none" stroke="#e4e4e4" stroke-width="1.5"/><rect x="0.8" y="6.4" width="10.2" height="7.8" rx="0.8" fill="#fbfbfb" stroke="#e4e4e4" stroke-width="1.5"/><circle cx="5.9" cy="10.3" r="1" fill="#dcdcdc"/></svg>
<svg class="a" style="left:742.4px;top:819.9px;" width="15.4" height="17.6" viewBox="0 0 15.4 17.6"><path d="M7.7,0 C5.2,1.6 2.7,2.1 0.4,2.3 C0.2,8.2 1.6,13.6 7.7,17.5 C13.8,13.6 15.2,8.2 15,2.3 C12.7,2.1 10.2,1.6 7.7,0 Z" fill="#eef5fc"/></svg>
<div class="a t" style="top:822px;font-size:15.4px;color:#3c3c3c;text-rendering:geometricPrecision;right:1650.8px;">5</div>
<div class="a t" style="top:822px;font-size:15.4px;color:#3c3c3c;text-rendering:geometricPrecision;right:1500.8px;">7</div>
<div class="a t" style="top:822px;font-size:15.4px;color:#3c3c3c;text-rendering:geometricPrecision;right:1350.8px;">7</div>
<svg class="a" style="left:1233.9px;top:823.2px;" width="16.2" height="15" viewBox="0 0 16.2 15"><rect x="0" y="5.6" width="2.4" height="9.2" fill="#ff8585"/><rect x="3.4" y="4.6" width="2.4" height="10.2" fill="#ff8585"/><rect x="6.8" y="6.7" width="2.4" height="8.1" fill="#ff8585"/><rect x="10.2" y="3.6" width="2.4" height="11.2" fill="#ff8585"/><rect x="13.6" y="0" width="2.4" height="14.8" fill="#ff8585"/></svg>
<div class="a" style="left:1273.5px;top:821px;width:82.9px;height:22.48px;overflow:hidden"><div class="a t" style="font-size:15.4px;color:#3c3c3c;left:0;top:2px;text-rendering:geometricPrecision;">23.07.2022 </div></div>
<div class="a" style="left:5px;top:870px;width:56px;height:1px;background:#e2e2e2;"></div>
<div class="a t" style="top:851px;font-size:15.4px;color:#3c3c3c;text-rendering:geometricPrecision;left:20.4px;">26</div>
<div class="a" style="left:95px;top:848px;width:17px;height:17px;background:#fff;border:1px solid #666;"></div>
<div class="a t" style="top:850px;font-size:15.5px;color:#444;letter-spacing:0.42px;left:141.5px;">купить дом +в анапе +до 100м2</div>
<svg class="a" style="left:725.1px;top:848.98px;" width="11.8" height="15" viewBox="0 0 11.8 15"><path d="M2.6,6.4 V4.2 A3.3,3.3 0 0 1 9.2,4.2 V6.4" fill="none" stroke="#e4e4e4" stroke-width="1.5"/><rect x="0.8" y="6.4" width="10.2" height="7.8" rx="0.8" fill="#fbfbfb" stroke="#e4e4e4" stroke-width="1.5"/><circle cx="5.9" cy="10.3" r="1" fill="#dcdcdc"/></svg>
<svg class="a" style="left:742.4px;top:847.77px;" width="15.4" height="17.6" viewBox="0 0 15.4 17.6"><path d="M7.7,0 C5.2,1.6 2.7,2.1 0.4,2.3 C0.2,8.2 1.6,13.6 7.7,17.5 C13.8,13.6 15.2,8.2 15,2.3 C12.7,2.1 10.2,1.6 7.7,0 Z" fill="#eef5fc"/></svg>
<div class="a t" style="top:850px;font-size:15.4px;color:#3c3c3c;text-rendering:geometricPrecision;right:1650.8px;">6</div>
<div class="a t" style="top:850px;font-size:15.4px;color:#3c3c3c;text-rendering:geometricPrecision;right:1500.8px;">6</div>
<div class="a t" style="top:850px;font-size:15.4px;color:#3c3c3c;text-rendering:geometricPrecision;right:1350.8px;">6</div>
<svg class="a" style="left:1233.9px;top:851.07px;" width="16.2" height="15" viewBox="0 0 16.2 15"><rect x="0" y="5.6" width="2.4" height="9.2" fill="#ff8585"/><rect x="3.4" y="4.6" width="2.4" height="10.2" fill="#ff8585"/><rect x="6.8" y="6.7" width="2.4" height="8.1" fill="#ff8585"/><rect x="10.2" y="3.6" width="2.4" height="11.2" fill="#ff8585"/><rect x="13.6" y="0" width="2.4" height="14.8" fill="#ff8585"/></svg>
<div class="a" style="left:1273.5px;top:849px;width:82.9px;height:22.48px;overflow:hidden"><div class="a t" style="font-size:15.4px;color:#3c3c3c;left:0;top:2px;text-rendering:geometricPrecision;">23.07.2022 </div></div>
<div class="a" style="left:5px;top:897px;width:56px;height:1px;background:#e2e2e2;"></div>
<div class="a t" style="top:879px;font-size:15.4px;color:#3c3c3c;text-rendering:geometricPrecision;left:20.4px;">27</div>
<div class="a" style="left:95px;top:876px;width:17px;height:17px;background:#fff;border:1px solid #666;"></div>
<div class="a t" style="top:878px;font-size:15.5px;color:#444;letter-spacing:0.37px;left:141.5px;">купить дом +в анапе цена</div>
<svg class="a" style="left:725.1px;top:876.85px;" width="11.8" height="15" viewBox="0 0 11.8 15"><path d="M2.6,6.4 V4.2 A3.3,3.3 0 0 1 9.2,4.2 V6.4" fill="none" stroke="#e4e4e4" stroke-width="1.5"/><rect x="0.8" y="6.4" width="10.2" height="7.8" rx="0.8" fill="#fbfbfb" stroke="#e4e4e4" stroke-width="1.5"/><circle cx="5.9" cy="10.3" r="1" fill="#dcdcdc"/></svg>
<svg class="a" style="left:742.4px;top:875.65px;" width="15.4" height="17.6" viewBox="0 0 15.4 17.6"><path d="M7.7,0 C5.2,1.6 2.7,2.1 0.4,2.3 C0.2,8.2 1.6,13.6 7.7,17.5 C13.8,13.6 15.2,8.2 15,2.3 C12.7,2.1 10.2,1.6 7.7,0 Z" fill="#eef5fc"/></svg>
<div class="a t" style="top:878px;font-size:15.4px;color:#3c3c3c;text-rendering:geometricPrecision;right:1650.8px;">418</div>
<div class="a t" style="top:878px;font-size:15.4px;color:#3c3c3c;text-rendering:geometricPrecision;right:1500.8px;">16</div>
<div class="a t" style="top:878px;font-size:15.4px;color:#3c3c3c;text-rendering:geometricPrecision;right:1350.8px;">5</div>
<svg class="a" style="left:1233.9px;top:878.95px;" width="16.2" height="15" viewBox="0 0 16.2 15"><rect x="0" y="5.6" width="2.4" height="9.2" fill="#ff8585"/><rect x="3.4" y="4.6" width="2.4" height="10.2" fill="#ff8585"/><rect x="6.8" y="6.7" width="2.4" height="8.1" fill="#ff8585"/><rect x="10.2" y="3.6" width="2.4" height="11.2" fill="#ff8585"/><rect x="13.6" y="0" width="2.4" height="14.8" fill="#ff8585"/></svg>
<div class="a" style="left:1273.5px;top:877px;width:82.9px;height:22.48px;overflow:hidden"><div class="a t" style="font-size:15.4px;color:#3c3c3c;left:0;top:2px;text-rendering:geometricPrecision;">23.07.2022 09:41</div></div>
<div class="a" style="left:5px;top:925px;width:56px;height:1px;background:#e2e2e2;"></div>
<div class="a t" style="top:907px;font-size:15.4px;color:#3c3c3c;text-rendering:geometricPrecision;left:20.4px;">28</div>
<div class="a" style="left:95px;top:904px;width:17px;height:17px;background:#fff;border:1px solid #666;"></div>
<div class="a t" style="top:906px;font-size:15.5px;color:#444;letter-spacing:0.37px;left:141.5px;">купить дом +в станице анапы</div>
<svg class="a" style="left:725.1px;top:904.73px;" width="11.8" height="15" viewBox="0 0 11.8 15"><path d="M2.6,6.4 V4.2 A3.3,3.3 0 0 1 9.2,4.2 V6.4" fill="none" stroke="#e4e4e4" stroke-width="1.5"/><rect x="0.8" y="6.4" width="10.2" height="7.8" rx="0.8" fill="#fbfbfb" stroke="#e4e4e4" stroke-width="1.5"/><circle cx="5.9" cy="10.3" r="1" fill="#dcdcdc"/></svg>
<svg class="a" style="left:742.4px;top:903.52px;" width="15.4" height="17.6" viewBox="0 0 15.4 17.6"><path d="M7.7,0 C5.2,1.6 2.7,2.1 0.4,2.3 C0.2,8.2 1.6,13.6 7.7,17.5 C13.8,13.6 15.2,8.2 15,2.3 C12.7,2.1 10.2,1.6 7.7,0 Z" fill="#eef5fc"/></svg>
<div class="a t" style="top:906px;font-size:15.4px;color:#3c3c3c;text-rendering:geometricPrecision;right:1650.8px;">76</div>
<div class="a t" style="top:906px;font-size:15.4px;color:#3c3c3c;text-rendering:geometricPrecision;right:1500.8px;">6</div>
<div class="a t" style="top:906px;font-size:15.4px;color:#3c3c3c;text-rendering:geometricPrecision;right:1350.8px;">5</div>
<svg class="a" style="left:1233.9px;top:906.82px;" width="16.2" height="15" viewBox="0 0 16.2 15"><rect x="0" y="5.6" width="2.4" height="9.2" fill="#ff8585"/><rect x="3.4" y="4.6" width="2.4" height="10.2" fill="#ff8585"/><rect x="6.8" y="6.7" width="2.4" height="8.1" fill="#ff8585"/><rect x="10.2" y="3.6" width="2.4" height="11.2" fill="#ff8585"/><rect x="13.6" y="0" width="2.4" height="14.8" fill="#ff8585"/></svg>
<div class="a" style="left:1273.5px;top:905px;width:82.9px;height:22.48px;overflow:hidden"><div class="a t" style="font-size:15.4px;color:#3c3c3c;left:0;top:2px;text-rendering:geometricPrecision;">23.07.2022 09:41</div></div>
<div class="a" style="left:5px;top:953px;width:56px;height:1px;background:#e2e2e2;"></div>
<div class="a t" style="top:935px;font-size:15.4px;color:#3c3c3c;text-rendering:geometricPrecision;left:20.4px;">29</div>
<div class="a" style="left:95px;top:932px;width:17px;height:17px;background:#fff;border:1px solid #666;"></div>
<div class="a t" style="top:934px;font-size:15.5px;color:#444;letter-spacing:0.42px;left:141.5px;">недорогие дома +в анапе</div>
<svg class="a" style="left:725.1px;top:932.6px;" width="11.8" height="15" viewBox="0 0 11.8 15"><path d="M2.6,6.4 V4.2 A3.3,3.3 0 0 1 9.2,4.2 V6.4" fill="none" stroke="#e4e4e4" stroke-width="1.5"/><rect x="0.8" y="6.4" width="10.2" height="7.8" rx="0.8" fill="#fbfbfb" stroke="#e4e4e4" stroke-width="1.5"/><circle cx="5.9" cy="10.3" r="1" fill="#dcdcdc"/></svg>
<svg class="a" style="left:742.4px;top:931.4px;" width="15.4" height="17.6" viewBox="0 0 15.4 17.6"><path d="M7.7,0 C5.2,1.6 2.7,2.1 0.4,2.3 C0.2,8.2 1.6,13.6 7.7,17.5 C13.8,13.6 15.2,8.2 15,2.3 C12.7,2.1 10.2,1.6 7.7,0 Z" fill="#eef5fc"/></svg>
<div class="a t" style="top:934px;font-size:15.4px;color:#3c3c3c;text-rendering:geometricPrecision;right:1650.8px;">3981</div>
<div class="a t" style="top:934px;font-size:15.4px;color:#3c3c3c;text-rendering:geometricPrecision;right:1500.8px;">8</div>
<div class="a t" style="top:934px;font-size:15.4px;color:#3c3c3c;text-rendering:geometricPrecision;right:1350.8px;">5</div>
<svg class="a" style="left:1233.9px;top:934.7px;" width="16.2" height="15" viewBox="0 0 16.2 15"><rect x="0" y="5.6" width="2.4" height="9.2" fill="#ff8585"/><rect x="3.4" y="4.6" width="2.4" height="10.2" fill="#ff8585"/><rect x="6.8" y="6.7" width="2.4" height="8.1" fill="#ff8585"/><rect x="10.2" y="3.6" width="2.4" height="11.2" fill="#ff8585"/><rect x="13.6" y="0" width="2.4" height="14.8" fill="#ff8585"/></svg>
<div class="a" style="left:1273.5px;top:933px;width:82.9px;height:22.48px;overflow:hidden"><div class="a t" style="font-size:15.4px;color:#3c3c3c;left:0;top:2px;text-rendering:geometricPrecision;">23.07.2022 </div></div>
<div class="a" style="left:5px;top:981px;width:56px;height:1px;background:#e2e2e2;"></div>
<div class="a t" style="top:963px;font-size:15.4px;color:#3c3c3c;text-rendering:geometricPrecision;left:20.4px;">30</div>
<div class="a" style="left:95px;top:960px;width:17px;height:17px;background:#fff;border:1px solid #666;"></div>
<div class="a t" style="top:962px;font-size:15.5px;color:#444;letter-spacing:0.42px;left:141.5px;">купить дом около анапы</div>
<svg class="a" style="left:725.1px;top:960.48px;" width="11.8" height="15" viewBox="0 0 11.8 15"><path d="M2.6,6.4 V4.2 A3.3,3.3 0 0 1 9.2,4.2 V6.4" fill="none" stroke="#e4e4e4" stroke-width="1.5"/><rect x="0.8" y="6.4" width="10.2" height="7.8" rx="0.8" fill="#fbfbfb" stroke="#e4e4e4" stroke-width="1.5"/><circle cx="5.9" cy="10.3" r="1" fill="#dcdcdc"/></svg>
<svg class="a" style="left:742.4px;top:959.27px;" width="15.4" height="17.6" viewBox="0 0 15.4 17.6"><path d="M7.7,0 C5.2,1.6 2.7,2.1 0.4,2.3 C0.2,8.2 1.6,13.6 7.7,17.5 C13.8,13.6 15.2,8.2 15,2.3 C12.7,2.1 10.2,1.6 7.7,0 Z" fill="#eef5fc"/></svg>
<div class="a t" style="top:962px;font-size:15.4px;color:#3c3c3c;text-rendering:geometricPrecision;right:1650.8px;">19</div>
<div class="a t" style="top:962px;font-size:15.4px;color:#3c3c3c;text-rendering:geometricPrecision;right:1500.8px;">5</div>
<div class="a t" style="top:962px;font-size:15.4px;color:#3c3c3c;text-rendering:geometricPrecision;right:1350.8px;">5</div>
<svg class="a" style="left:1233.9px;top:962.57px;" width="16.2" height="15" viewBox="0 0 16.2 15"><rect x="0" y="5.6" width="2.4" height="9.2" fill="#ff8585"/><rect x="3.4" y="4.6" width="2.4" height="10.2" fill="#ff8585"/><rect x="6.8" y="6.7" width="2.4" height="8.1" fill="#ff8585"/><rect x="10.2" y="3.6" width="2.4" height="11.2" fill="#ff8585"/><rect x="13.6" y="0" width="2.4" height="14.8" fill="#ff8585"/></svg>
<div class="a" style="left:1273.5px;top:961px;width:82.9px;height:22.48px;overflow:hidden"><div class="a t" style="font-size:15.4px;color:#3c3c3c;left:0;top:2px;text-rendering:geometricPrecision;">23.07.2022 </div></div>
<div class="a" style="left:5px;top:1009px;width:56px;height:1px;background:#e2e2e2;"></div>
<div class="a t" style="top:990px;font-size:15.4px;color:#3c3c3c;text-rendering:geometricPrecision;left:20.4px;">31</div>
<div class="a" style="left:95px;top:988px;width:17px;height:17px;background:#fff;border:1px solid #666;"></div>
<div class="a t" style="top:989px;font-size:15.5px;color:#444;letter-spacing:0.45px;left:141.5px;">купить дом +в округе анапы +до 7000000</div>
<svg class="a" style="left:725.1px;top:988.35px;" width="11.8" height="15" viewBox="0 0 11.8 15"><path d="M2.6,6.4 V4.2 A3.3,3.3 0 0 1 9.2,4.2 V6.4" fill="none" stroke="#e4e4e4" stroke-width="1.5"/><rect x="0.8" y="6.4" width="10.2" height="7.8" rx="0.8" fill="#fbfbfb" stroke="#e4e4e4" stroke-width="1.5"/><circle cx="5.9" cy="10.3" r="1" fill="#dcdcdc"/></svg>
<svg class="a" style="left:742.4px;top:987.15px;" width="15.4" height="17.6" viewBox="0 0 15.4 17.6"><path d="M7.7,0 C5.2,1.6 2.7,2.1 0.4,2.3 C0.2,8.2 1.6,13.6 7.7,17.5 C13.8,13.6 15.2,8.2 15,2.3 C12.7,2.1 10.2,1.6 7.7,0 Z" fill="#eef5fc"/></svg>
<div class="a t" style="top:990px;font-size:15.4px;color:#3c3c3c;text-rendering:geometricPrecision;right:1650.8px;">6</div>
<div class="a t" style="top:990px;font-size:15.4px;color:#3c3c3c;text-rendering:geometricPrecision;right:1500.8px;">5</div>
<div class="a t" style="top:990px;font-size:15.4px;color:#3c3c3c;text-rendering:geometricPrecision;right:1350.8px;">5</div>
<svg class="a" style="left:1233.9px;top:990.45px;" width="16.2" height="15" viewBox="0 0 16.2 15"><rect x="0" y="5.6" width="2.4" height="9.2" fill="#ff8585"/><rect x="3.4" y="4.6" width="2.4" height="10.2" fill="#ff8585"/><rect x="6.8" y="6.7" width="2.4" height="8.1" fill="#ff8585"/><rect x="10.2" y="3.6" width="2.4" height="11.2" fill="#ff8585"/><rect x="13.6" y="0" width="2.4" height="14.8" fill="#ff8585"/></svg>
<div class="a" style="left:1273.5px;top:988px;width:82.9px;height:22.48px;overflow:hidden"><div class="a t" style="font-size:15.4px;color:#3c3c3c;left:0;top:2px;text-rendering:geometricPrecision;">23.07.2022 </div></div>
<div class="a" style="left:5px;top:1037px;width:56px;height:1px;background:#e2e2e2;"></div>
<div class="a t" style="top:1018px;font-size:15.4px;color:#3c3c3c;text-rendering:geometricPrecision;left:20.4px;">32</div>
<div class="a" style="left:95px;top:1016px;width:17px;height:17px;background:#fff;border:1px solid #666;"></div>
<div class="a t" style="top:1017px;font-size:15.5px;color:#444;letter-spacing:0.39px;left:141.5px;">анапа купить шикарный дом</div>
<svg class="a" style="left:725.1px;top:1016.23px;" width="11.8" height="15" viewBox="0 0 11.8 15"><path d="M2.6,6.4 V4.2 A3.3,3.3 0 0 1 9.2,4.2 V6.4" fill="none" stroke="#e4e4e4" stroke-width="1.5"/><rect x="0.8" y="6.4" width="10.2" height="7.8" rx="0.8" fill="#fbfbfb" stroke="#e4e4e4" stroke-width="1.5"/><circle cx="5.9" cy="10.3" r="1" fill="#dcdcdc"/></svg>
<svg class="a" style="left:742.4px;top:1015.02px;" width="15.4" height="17.6" viewBox="0 0 15.4 17.6"><path d="M7.7,0 C5.2,1.6 2.7,2.1 0.4,2.3 C0.2,8.2 1.6,13.6 7.7,17.5 C13.8,13.6 15.2,8.2 15,2.3 C12.7,2.1 10.2,1.6 7.7,0 Z" fill="#eef5fc"/></svg>
<div class="a t" style="top:1017px;font-size:15.4px;color:#3c3c3c;text-rendering:geometricPrecision;right:1650.8px;">6</div>
<div class="a t" style="top:1017px;font-size:15.4px;color:#3c3c3c;text-rendering:geometricPrecision;right:1500.8px;">5</div>
<div class="a t" style="top:1017px;font-size:15.4px;color:#3c3c3c;text-rendering:geometricPrecision;right:1350.8px;">5</div>
<svg class="a" style="left:1233.9px;top:1018.32px;" width="16.2" height="15" viewBox="0 0 16.2 15"><rect x="0" y="5.6" width="2.4" height="9.2" fill="#ff8585"/><rect x="3.4" y="4.6" width="2.4" height="10.2" fill="#ff8585"/><rect x="6.8" y="6.7" width="2.4" height="8.1" fill="#ff8585"/><rect x="10.2" y="3.6" width="2.4" height="11.2" fill="#ff8585"/><rect x="13.6" y="0" width="2.4" height="14.8" fill="#ff8585"/></svg>
<div class="a" style="left:1273.5px;top:1016px;width:82.9px;height:22.48px;overflow:hidden"><div class="a t" style="font-size:15.4px;color:#3c3c3c;left:0;top:2px;text-rendering:geometricPrecision;">23.07.2022 </div></div>
<div class="a" style="left:5px;top:1065px;width:56px;height:1px;background:#e2e2e2;"></div>
<div class="a t" style="top:1046px;font-size:15.4px;color:#3c3c3c;text-rendering:geometricPrecision;left:20.4px;">33</div>
<div class="a" style="left:95px;top:1043px;width:17px;height:17px;background:#fff;border:1px solid #666;"></div>
<div class="a t" style="top:1045px;font-size:15.5px;color:#444;letter-spacing:0.25px;left:141.5px;">модульные дома анапа</div>
<svg class="a" style="left:725.1px;top:1044.1px;" width="11.8" height="15" viewBox="0 0 11.8 15"><path d="M2.6,6.4 V4.2 A3.3,3.3 0 0 1 9.2,4.2 V6.4" fill="none" stroke="#e4e4e4" stroke-width="1.5"/><rect x="0.8" y="6.4" width="10.2" height="7.8" rx="0.8" fill="#fbfbfb" stroke="#e4e4e4" stroke-width="1.5"/><circle cx="5.9" cy="10.3" r="1" fill="#dcdcdc"/></svg>
<svg class="a" style="left:742.4px;top:1042.9px;" width="15.4" height="17.6" viewBox="0 0 15.4 17.6"><path d="M7.7,0 C5.2,1.6 2.7,2.1 0.4,2.3 C0.2,8.2 1.6,13.6 7.7,17.5 C13.8,13.6 15.2,8.2 15,2.3 C12.7,2.1 10.2,1.6 7.7,0 Z" fill="#eef5fc"/></svg>
<div class="a t" style="top:1045px;font-size:15.4px;color:#3c3c3c;text-rendering:geometricPrecision;right:1650.8px;">35</div>
<div class="a t" style="top:1045px;font-size:15.4px;color:#3c3c3c;text-rendering:geometricPrecision;right:1500.8px;">9</div>
<div class="a t" style="top:1045px;font-size:15.4px;color:#3c3c3c;text-rendering:geometricPrecision;right:1350.8px;">5</div>
<svg class="a" style="left:1233.9px;top:1046.2px;" width="16.2" height="15" viewBox="0 0 16.2 15"><rect x="0" y="5.6" width="2.4" height="9.2" fill="#ff8585"/><rect x="3.4" y="4.6" width="2.4" height="10.2" fill="#ff8585"/><rect x="6.8" y="6.7" width="2.4" height="8.1" fill="#ff8585"/><rect x="10.2" y="3.6" width="2.4" height="11.2" fill="#ff8585"/><rect x="13.6" y="0" width="2.4" height="14.8" fill="#ff8585"/></svg>
<div class="a" style="left:1273.5px;top:1044px;width:82.9px;height:22.48px;overflow:hidden"><div class="a t" style="font-size:15.4px;color:#3c3c3c;left:0;top:2px;text-rendering:geometricPrecision;">23.07.2022 19:41</div></div>
<div class="a" style="left:5px;top:1066px;width:56px;height:2px;background:#fff;"></div>
<div class="a" style="left:1953px;top:51px;width:19px;height:1017px;background:#f2f2f2;"></div>
<div class="a" style="left:1953px;top:51px;width:19px;height:19px;background:#fff;border:1px solid #a6a6a6;"></div>
<svg class="a" style="left:1957.6px;top:57.6px;" width="9.6" height="5.4" viewBox="0 0 9.6 5.4"><path d="M0,5.2 L4.8,0 L9.6,5.2 Z" fill="#808080"/></svg>
<div class="a" style="left:1953px;top:70px;width:19px;height:204px;background:#fff;border:1px solid #a6a6a6;"></div>
<div class="a" style="left:1953px;top:1049px;width:19px;height:18px;background:#fff;border:1px solid #a6a6a6;"></div>
<svg class="a" style="left:1957.8px;top:1055.4px;" width="9.6" height="5.4" viewBox="0 0 9.6 5.4"><path d="M0,0 L4.8,5.2 L9.6,0 Z" fill="#606060"/></svg>
<div class="a" style="left:6px;top:1070px;width:1945px;height:19px;background:#f2f2f2;"></div>
<div class="a" style="left:6px;top:1070px;width:19px;height:19px;background:#fff;border:1px solid #a6a6a6;"></div>
<svg class="a" style="left:13px;top:1074.6px;" width="5.4" height="9.6" viewBox="0 0 5.4 9.6"><path d="M5.2,0 L0,4.8 L5.2,9.6 Z" fill="#707070"/></svg>
<div class="a" style="left:25px;top:1070px;width:1636px;height:19px;background:#fff;border:1px solid #a6a6a6;"></div>
<div class="a" style="left:1932px;top:1070px;width:19px;height:19px;background:#fff;border:1px solid #a6a6a6;"></div>
<svg class="a" style="left:1939px;top:1074.6px;" width="5.4" height="9.6" viewBox="0 0 5.4 9.6"><path d="M0,0 L5.2,4.8 L0,9.6 Z" fill="#606060"/></svg>
<div class="a" style="left:4px;top:1102px;width:101px;height:32px;background:#fff;border:1px solid #a3a3a3;"></div>
<svg class="a" style="left:21.8px;top:1112px;" width="11.6" height="12.2" viewBox="0 0 11.6 12.2"><rect x="0" y="0" width="4.6" height="4.8" fill="#111"/><rect x="0" y="7.3" width="4.6" height="4.8" fill="#111"/><rect x="7" y="0" width="4.6" height="4.8" fill="#111"/><rect x="7" y="7.3" width="4.6" height="4.8" fill="#111"/></svg>
<div class="a t" style="top:1111px;font-size:15.2px;color:#444;letter-spacing:-0.24px;left:39.2px;">Журнал</div>
<div class="a" style="left:113px;top:1102px;width:139px;height:32px;background:#fff;border:1px solid #a3a3a3;"></div>
<svg class="a" style="left:130.8px;top:1112px;" width="12.2" height="12.2" viewBox="0 0 12.2 12.2"><rect x="0" y="0" width="4.8" height="4.8" fill="#e8202a"/><rect x="7" y="0" width="4.8" height="4.8" fill="#3f48cc"/><rect x="0" y="7.3" width="4.8" height="4.8" fill="#22a24a"/><rect x="7" y="7.3" width="4.8" height="4.8" fill="#111"/></svg>
<div class="a t" style="top:1111px;font-size:15.2px;color:#444;letter-spacing:-0.21px;left:149.1px;">Процессы (0)</div>
<div class="a" style="left:260px;top:1102px;width:137px;height:32px;background:#fff;border:1px solid #a3a3a3;"></div>
<svg class="a" style="left:280.8px;top:1107.6px;" width="20.4" height="20.6" viewBox="0 0 20.4 20.6"><path d="M7.4,0 H13.4 L7.6,20.4 H0 Z" fill="#4a8af4"/><path d="M7.4,0 H13.2 L20.4,20.4 H14.2 L9.8,8.6 Z" fill="#1ea362"/></svg>
<div class="a t" style="top:1111px;font-size:15.2px;color:#444;letter-spacing:-0.26px;left:308.2px;">Google.Ads</div>
<div class="a" style="left:405px;top:1102px;width:169px;height:32px;background:#fff;border:1px solid #a3a3a3;"></div>
<svg class="a" style="left:423px;top:1107.5px;" width="20" height="21" viewBox="0 0 20 21"><path d="M1.5,0.5 H13 L19.5,10.5 L13,20.5 H1.5 Z" fill="#e6e6e6" stroke="#c8c8c8" stroke-width="0.8"/><text x="4" y="16" font-family="Liberation Sans" font-weight="700" font-size="14.5" fill="#e52620">Я</text></svg>
<div class="a t" style="top:1111px;font-size:15.2px;color:#444;letter-spacing:-0.34px;left:449.4px;">Сервисы Яндекс</div>
<div class="a" style="left:582px;top:1102px;width:176px;height:32px;background:#fff;border:1px solid #a3a3a3;"></div>
<svg class="a" style="left:602px;top:1105px;" width="27" height="27" viewBox="0 0 27 27"><path d="M2.4,1.4 H19 L25.8,12 V25.6 H2.4 Z" fill="#fbfbfb" stroke="#cfcfcf" stroke-width="0.9"/><path d="M1.6,1.6 V26 H20" fill="none" stroke="#bdbdbd" stroke-width="1.6"/><path d="M19,1.4 L25.8,12 H21 Z" fill="#f0f0f0" stroke="#dcdcdc" stroke-width="0.6"/><path d="M8.6,13.3 V8.9 A3,3 0 0 1 14.6,8.9 V13.3" fill="none" stroke="#f5362c" stroke-width="2.8"/><text x="9.2" y="24.6" font-family="Liberation Sans" font-style="italic" font-size="11.5" fill="#a6a6a6" letter-spacing="-0.4">Ad</text></svg>
<div class="a t" style="top:1108px;font-size:15.2px;color:#444;letter-spacing:-0.46px;left:635.5px;">Яндекс Реклама</div>
<div class="a" style="left:765px;top:1102px;width:141px;height:32px;background:#fff;border:1px solid #a3a3a3;"></div>
<svg class="a" style="left:779.5px;top:1107.6px;" width="21.4" height="20.6" viewBox="0 0 21.4 20.6"><path d="M0,0 H20 V15 H17.4 V16.4 H10.5 V20.4 H8.8 V18.6 H6 V20.4 H0 Z" fill="#ffcc00"/><path d="M17.2,14.6 H19.4 L21.4,20 H18.4 Z" fill="#e2b400"/></svg>
<div class="a t" style="top:1111px;font-size:15.2px;color:#444;letter-spacing:-0.23px;left:809px;">Объявления</div>
<div class="a" style="left:914px;top:1102px;width:152px;height:32px;background:#fff;border:1px solid #a3a3a3;"></div>
<svg class="a" style="left:935px;top:1107px;" width="16" height="21.6" viewBox="0 0 16 21.6"><rect x="0.4" y="0.4" width="15.2" height="20.8" fill="#fbfbfb" stroke="#b0b0b0" stroke-width="0.8"/><rect x="2.4" y="2.4" width="11.4" height="1" fill="#a0a0a0"/><rect x="2.4" y="4.45" width="11.4" height="1" fill="#c8a0d8"/><rect x="2.4" y="6.5" width="11.4" height="1" fill="#a0c8a0"/><rect x="2.4" y="8.55" width="11.4" height="1" fill="#d8c890"/><rect x="2.4" y="10.6" width="11.4" height="1" fill="#a0b0d8"/><rect x="2.4" y="12.65" width="11.4" height="1" fill="#d8a0a0"/><rect x="2.4" y="14.7" width="11.4" height="1" fill="#a0a0a0"/><rect x="2.4" y="16.75" width="11.4" height="1" fill="#b8d8a0"/><rect x="2.4" y="18.8" width="11.4" height="1" fill="#c8a0d8"/><rect x="5.2" y="1" width="0.7" height="19.6" fill="#d0d0d0"/></svg>
<div class="a t" style="top:1111px;font-size:15.2px;color:#444;letter-spacing:-0.87px;left:962.6px;">Данные SERP</div>
<div class="a" style="left:1074px;top:1102px;width:118px;height:32px;background:#fff;border:1px solid #a3a3a3;"></div>
<svg class="a" style="left:1092px;top:1112.6px;" width="20.4" height="11.4" viewBox="0 0 20.4 11.4"><path d="M0.5,6.2 H6 V3 H12.8 V6.2 H19.8 V11 H0.5 Z" fill="#f6c89a" stroke="#b87a50" stroke-width="0.8"/><rect x="6.6" y="0" width="6" height="2.6" fill="#c0392b"/><rect x="0.5" y="4.6" width="5.5" height="1.6" fill="#4a78c8"/><rect x="13" y="4.6" width="6.8" height="1.6" fill="#3a9a5c"/></svg>
<div class="a t" style="top:1111px;font-size:15.2px;color:#444;letter-spacing:0.21px;left:1119px;">Позиции</div>
<div class="a" style="left:0px;top:1142px;width:2560px;height:32px;background:#0072c6;"></div>
<div class="a" style="left:0;top:1174px;width:2560px;height:6px;background:linear-gradient(90deg,#d5e2da 0%,#dbe8e2 12%,#dcebe8 25%,#cdeeee 40%,#c4eef0 55%,#c6ecf0 75%,#c2e8ee 100%)"></div>
<div class="a t" style="top:1152px;font-size:15.4px;color:#fff;font-weight:700;letter-spacing:-0.14px;text-rendering:geometricPrecision;left:9.4px;">162</div>
<div class="a t" style="top:1152px;font-size:14.9px;color:#fff;letter-spacing:-0.5px;left:39.8px;">фразы</div>
<svg class="a" style="left:112px;top:1151px;" width="14.4" height="13.6" viewBox="0 0 14.4 13.6"><rect width="14.4" height="13.6" fill="#b9d7ee"/><path d="M2.4,4 H6.2 L7.2,5 H12 V10.8 H2.4 Z" fill="#f1c46c" stroke="#d6a24a" stroke-width="0.5"/></svg>
<div class="a t" style="top:1152px;font-size:15.4px;color:#fff;font-weight:700;letter-spacing:-1px;text-rendering:geometricPrecision;left:131.2px;">17</div>
<svg class="a" style="left:2241.4px;top:1147.6px;" width="17.6" height="18.6" viewBox="0 0 17.6 18.6"><path d="M6.2,2.2 V0.6 H11.4 V2.2" fill="none" stroke="#d84a40" stroke-width="1.2"/><rect x="0.4" y="2.2" width="16.8" height="2.6" rx="0.8" fill="#d84a40"/><path d="M1.8,5.6 H15.8 L15,18.2 H2.6 Z" fill="#d84a40"/><path d="M5.2,7 V16.6 M8.8,7 V16.6 M12.4,7 V16.6" stroke="#f6b0ac" stroke-width="1.7"/></svg>
<svg class="a" style="left:2271.8px;top:1148.6px;" width="16.6" height="18.4" viewBox="0 0 16.6 18.4"><path d="M8.3,0 C5.6,1.7 3,2.2 0.4,2.4 C0.2,8.6 1.7,14.2 8.3,18.3 C14.9,14.2 16.4,8.6 16.2,2.4 C13.6,2.2 11,1.7 8.3,0 Z" fill="#6a9fd4"/></svg>
<svg class="a" style="left:2340px;top:1148px;" width="30" height="19.8" viewBox="0 0 30 19.8"><rect width="30" height="19.8" fill="#a9b9cb"/><rect x="6" y="1.4" width="17.6" height="17" fill="#b3bce3" stroke="#9aa4cc" stroke-width="0.8"/><text x="8.6" y="13.4" font-family="Liberation Sans" font-size="8.5" fill="#5a6480" font-style="italic">\c8</text></svg>
<div class="a t" style="top:1152px;font-size:15.4px;color:#fff;font-weight:700;text-rendering:geometricPrecision;left:2375px;">0</div>
<svg class="a" style="left:2413.2px;top:1148.2px;" width="20.2" height="18.8" viewBox="0 0 20.2 18.8"><rect width="20.2" height="18.8" fill="#b3ddb3"/><path d="M3.4,9.6 L8,14.6 L17.4,3.6" fill="none" stroke="#4fb04f" stroke-width="2"/></svg>
<svg class="a" style="left:2448.6px;top:1148.4px;" width="19.2" height="18.6" viewBox="0 0 19.2 18.6"><path d="M2.2,8.2 A7.4,7.4 0 0 1 15.4,4.6" fill="none" stroke="#78aee6" stroke-width="2.4"/><path d="M17.6,0.6 V7 H11.2 Z" fill="#78aee6"/><path d="M17,10.4 A7.4,7.4 0 0 1 3.8,14" fill="none" stroke="#78aee6" stroke-width="2.4"/><path d="M1.6,18 V11.6 H8 Z" fill="#78aee6"/></svg>
<div class="a t" style="top:1151px;font-size:15.1px;color:#fff;letter-spacing:0.01px;left:2473.4px;">Обновить</div>
<div class="a" style="left:1983px;top:0px;width:577px;height:1px;background:#a8a8a8;"></div>
<div class="a" style="left:1983px;top:0px;width:1px;height:873px;background:#a8a8a8;"></div>
<div class="a" style="left:2558.6px;top:0px;width:1px;height:873px;background:#a8a8a8;"></div>
<div class="a" style="left:1983px;top:872px;width:576px;height:1px;background:#a8a8a8;"></div>
<div class="a" style="left:1984px;top:814px;width:574.6px;height:1px;background:#e6e6e6;"></div>
<div class="a" style="left:1984px;top:815px;width:574.6px;height:57px;background:#f5f5f5;"></div>
<div class="a t" style="top:9px;font-size:14.4px;color:#5c5c5c;letter-spacing:-0.09px;left:1996.6px;">Управление группами</div>
<svg class="a" style="left:2538px;top:9px;" width="10" height="12.8" viewBox="0 0 10 12.8"><path d="M1.9,0 H7.9 V7.4 H9.8 V8.9 H5.6 V11.6 H4.2 V8.9 H0 V7.4 H1.9 Z" fill="#8e8e8e"/></svg>
<svg class="a" style="left:1994px;top:37.6px;" width="15" height="15" viewBox="0 0 15 15"><path d="M7.5,1.5 V13.7 M1.4,7.6 H13.6" stroke="#000" stroke-width="2.9" stroke-linecap="round"/></svg>
<svg class="a" style="left:2020.4px;top:42.8px;" width="7.8" height="4.8" viewBox="0 0 7.8 4.8"><path d="M0,0 H7.8 L3.9,4.7 Z" fill="#4a7ebb"/></svg>
<svg class="a" style="left:2045px;top:39.2px;" width="19" height="12.6" viewBox="0 0 19 12.6"><circle cx="6.3" cy="6.3" r="6.2" fill="#4e4e4e"/><circle cx="12.6" cy="6.3" r="6.2" fill="#4e4e4e"/><path d="M9.45,2.3 A6.2,6.2 0 0 1 9.45,10.3 A6.2,6.2 0 0 1 9.45,2.3 Z" fill="#fff"/></svg>
<svg class="a" style="left:2072px;top:36.2px;" width="19" height="18.6" viewBox="0 0 19 18.6"><text x="-0.3" y="7.6" font-family="Liberation Sans" font-weight="700" font-size="10.4" fill="#2b2b2b">A</text><text x="0" y="18.4" font-family="Liberation Sans" font-weight="700" font-size="10.4" fill="#2b2b2b">Z</text><path d="M11.3,11.2 V2.4" stroke="#2b2b2b" stroke-width="2.5"/><path d="M8,4 L11.3,0 L14.6,4 Z" fill="#2b2b2b"/><path d="M16.3,6.6 V15.4" stroke="#2b2b2b" stroke-width="2.5"/><path d="M13,13.8 L16.3,17.8 L19.6,13.8 Z" fill="#2b2b2b"/></svg>
<svg class="a" style="left:2100.6px;top:42.8px;" width="7.8" height="4.8" viewBox="0 0 7.8 4.8"><path d="M0,0 H7.8 L3.9,4.7 Z" fill="#4a7ebb"/></svg>
<div class="a" style="left:2117px;top:34px;width:1px;height:22px;background:#aebbd0;"></div>
<div class="a" style="left:2014px;top:34px;width:1px;height:22px;background:#f3f3f3;"></div>
<div class="a" style="left:2037px;top:34px;width:1px;height:22px;background:#f3f3f3;"></div>
<div class="a" style="left:2095px;top:34px;width:1px;height:22px;background:#f3f3f3;"></div>
<div class="a" style="left:2124px;top:31px;width:120px;height:28px;background:#fff;border:1px solid #ababab;"></div>
<svg class="a" style="left:2228.2px;top:40.8px;" width="8.4" height="6.4" viewBox="0 0 8.4 6.4"><path d="M0.6,0.8 L4.2,5 L7.8,0.8" fill="none" stroke="#444" stroke-width="1.4"/></svg>
<svg class="a" style="left:2254px;top:35.2px;" width="20" height="20" viewBox="0 0 20 20"><circle cx="10" cy="10" r="9.9" fill="#dcdcdc"/><text x="5.9" y="15" font-family="Liberation Sans" font-weight="700" font-size="14" fill="#3c3c3c">?</text></svg>
<div class="a" style="left:2277px;top:34px;width:1px;height:22px;background:#b4c0d0;"></div>
<svg class="a" style="left:2285px;top:37.2px;" width="19" height="15.4" viewBox="0 0 19 15.4"><path d="M0,7.7 L7.6,0 V5.2 H19 V10.2 H7.6 V15.4 Z" fill="#d3e2f8"/></svg>
<svg class="a" style="left:2312px;top:37.2px;" width="19" height="15.4" viewBox="0 0 19 15.4"><path d="M19,7.7 L11.4,0 V5.2 H0 V10.2 H11.4 V15.4 Z" fill="#d3e2f8"/></svg>
<svg class="a" style="left:2340.2px;top:36.2px;" width="18" height="18" viewBox="0 0 18 18"><rect width="18" height="18" fill="#d3e2f8"/><rect x="4" y="4" width="10" height="10" fill="#d3e2f8" stroke="#f4f8fe" stroke-width="1.2"/><rect x="4" y="4" width="10" height="2.4" fill="#f4f8fe"/></svg>
<div class="a" style="left:2366px;top:34px;width:1px;height:22px;background:#b4c0d0;"></div>
<svg class="a" style="left:2373.4px;top:35.8px;" width="19.2" height="19.2" viewBox="0 0 19.2 19.2"><circle cx="9.6" cy="9.6" r="9.4" fill="#f3c670" stroke="#dcae58" stroke-width="0.6"/><path d="M4.4,8.6 A5.4,5.4 0 0 1 13.8,6.2" fill="none" stroke="#fff" stroke-width="1.6"/><path d="M15.6,3.6 V8.2 H11 Z" fill="#fff"/><path d="M14.8,10.6 A5.4,5.4 0 0 1 5.4,13" fill="none" stroke="#fff" stroke-width="1.6"/><path d="M3.6,15.6 V11 H8.2 Z" fill="#fff"/></svg>
<svg class="a" style="left:2403.6px;top:36.2px;" width="13.8" height="17" viewBox="0 0 13.8 17"><path d="M3,8 V5.4 A3.9,3.9 0 0 1 10.8,5.4 V8" fill="none" stroke="#4c4c4c" stroke-width="2"/><rect x="0" y="7.6" width="13.8" height="9.4" rx="1.2" fill="#4c4c4c"/><rect x="5.6" y="10.6" width="2.6" height="3" fill="#fff"/></svg>
<svg class="a" style="left:2531.2px;top:35.4px;" width="19.8" height="19.4" viewBox="0 0 19.8 19.4"><rect x="0.5" y="0.5" width="18.8" height="18.4" fill="#fff" stroke="#6c8ebc" stroke-width="1"/><rect x="1" y="7" width="17.8" height="5.6" fill="#a9d5f8"/><path d="M0.5,6.8 H19.3 M0.5,12.8 H19.3" stroke="#6c8ebc" stroke-width="0.9"/><path d="M6.8,0.5 V18.9 M13,0.5 V18.9" stroke="#b8cce4" stroke-width="0.9"/></svg>
<svg class="a" style="left:0;top:0" width="2560" height="600" viewBox="0 0 2560 600"><path d="M2001.5,92.6 L2001.5,545" stroke="#949494" stroke-width="1"/><path d="M2026.5,92.6 L2026.5,207.2" stroke="#949494" stroke-width="1"/><path d="M2026.5,233.47 L2026.5,320.3" stroke="#949494" stroke-width="1"/><path d="M2026.5,346.57 L2026.5,530.5" stroke="#949494" stroke-width="1"/><path d="M2026.5,106.5 L2041.4,106.5" stroke="#949494" stroke-width="1"/><path d="M2026.5,134.5 L2041.4,134.5" stroke="#949494" stroke-width="1"/><path d="M2026.5,162.5 L2041.4,162.5" stroke="#949494" stroke-width="1"/><path d="M2026.5,191.5 L2041.4,191.5" stroke="#949494" stroke-width="1"/><path d="M2026.5,304.5 L2041.4,304.5" stroke="#949494" stroke-width="1"/><path d="M2026.5,388.5 L2041.4,388.5" stroke="#949494" stroke-width="1"/><path d="M2026.5,417.5 L2041.4,417.5" stroke="#949494" stroke-width="1"/><path d="M2026.5,445.5 L2041.4,445.5" stroke="#949494" stroke-width="1"/><path d="M2026.5,473.5 L2041.4,473.5" stroke="#949494" stroke-width="1"/><path d="M2026.5,502.5 L2041.4,502.5" stroke="#949494" stroke-width="1"/><path d="M2026.5,530.5 L2041.4,530.5" stroke="#949494" stroke-width="1"/><path d="M2052.5,233.47 L2052.5,275.5" stroke="#949494" stroke-width="1"/><path d="M2052.5,247.5 L2067.4,247.5" stroke="#949494" stroke-width="1"/><path d="M2052.5,275.5 L2067.4,275.5" stroke="#949494" stroke-width="1"/><path d="M2052.5,346.57 L2052.5,360.5" stroke="#949494" stroke-width="1"/><path d="M2052.5,360.5 L2067.4,360.5" stroke="#949494" stroke-width="1"/><path d="M2007.1,74.1 v8.5 h-8.5 Z" fill="#7e7e7e"/><path d="M2031.1,215.1 v8.5 h-8.5 Z" fill="#7e7e7e"/><path d="M2031.1,328.1 v8.5 h-8.5 Z" fill="#7e7e7e"/><rect x="2017.2" y="64.1" width="221.9" height="28" fill="#b0c4ec"/><rect x="2017.7" y="64.6" width="220.9" height="27" fill="none" stroke="#6495ed" stroke-width="1"/><rect x="2017.2" y="64.1" width="10.8" height="28" fill="#6495ed"/><rect x="2041.3" y="92.1" width="219.8" height="28.28" fill="#b0c4ec"/><rect x="2041.8" y="92.6" width="218.8" height="27.28" fill="none" stroke="#6495ed" stroke-width="1"/><rect x="2041.3" y="92.1" width="10.8" height="28.28" fill="#6495ed"/><rect x="2041.3" y="120.38" width="291.8" height="28.27" fill="#b0c4ec"/><rect x="2041.8" y="120.88" width="290.8" height="27.27" fill="none" stroke="#6495ed" stroke-width="1"/><rect x="2041.3" y="120.38" width="10.8" height="28.27" fill="#6495ed"/><rect x="2041.3" y="148.65" width="265.6" height="28.28" fill="#b0c4ec"/><rect x="2041.8" y="149.15" width="264.6" height="27.28" fill="none" stroke="#6495ed" stroke-width="1"/><rect x="2041.3" y="148.65" width="10.8" height="28.28" fill="#6495ed"/><rect x="2041.3" y="176.92" width="214.7" height="28.28" fill="#b0c4ec"/><rect x="2041.8" y="177.42" width="213.7" height="27.28" fill="none" stroke="#6495ed" stroke-width="1"/><rect x="2041.3" y="176.92" width="10.8" height="28.28" fill="#6495ed"/><rect x="2041.3" y="205.2" width="242.3" height="28.28" fill="#b0c4ec"/><rect x="2041.8" y="205.7" width="241.3" height="27.28" fill="none" stroke="#6495ed" stroke-width="1"/><rect x="2041.3" y="205.2" width="10.8" height="28.28" fill="#6495ed"/><rect x="2067.4" y="233.47" width="289.6" height="28.28" fill="#b0c4ec"/><rect x="2067.9" y="233.97" width="288.6" height="27.28" fill="none" stroke="#6495ed" stroke-width="1"/><rect x="2067.4" y="233.47" width="10.8" height="28.28" fill="#6495ed"/><rect x="2067.4" y="261.75" width="363.3" height="28.27" fill="#b0c4ec"/><rect x="2067.9" y="262.25" width="362.3" height="27.27" fill="none" stroke="#6495ed" stroke-width="1"/><rect x="2067.4" y="261.75" width="10.8" height="28.27" fill="#6495ed"/><rect x="2041.3" y="290.02" width="290.9" height="28.27" fill="#b0c4ec"/><rect x="2041.8" y="290.52" width="289.9" height="27.27" fill="none" stroke="#6495ed" stroke-width="1"/><rect x="2041.3" y="290.02" width="10.8" height="28.27" fill="#6495ed"/><rect x="2041.3" y="318.3" width="245.1" height="28.28" fill="#b0c4ec"/><rect x="2041.8" y="318.8" width="244.1" height="27.28" fill="none" stroke="#6495ed" stroke-width="1"/><rect x="2041.3" y="318.3" width="10.8" height="28.28" fill="#6495ed"/><rect x="2067.4" y="346.57" width="292.4" height="28.28" fill="#b0c4ec"/><rect x="2067.9" y="347.07" width="291.4" height="27.28" fill="none" stroke="#6495ed" stroke-width="1"/><rect x="2067.4" y="346.57" width="10.8" height="28.28" fill="#6495ed"/><rect x="2041.3" y="374.85" width="324.8" height="28.27" fill="#b0c4ec"/><rect x="2041.8" y="375.35" width="323.8" height="27.27" fill="none" stroke="#6495ed" stroke-width="1"/><rect x="2041.3" y="374.85" width="10.8" height="28.27" fill="#6495ed"/><rect x="2041.3" y="403.12" width="288.2" height="28.27" fill="#b0c4ec"/><rect x="2041.8" y="403.62" width="287.2" height="27.27" fill="none" stroke="#6495ed" stroke-width="1"/><rect x="2041.3" y="403.12" width="10.8" height="28.27" fill="#6495ed"/><rect x="2041.3" y="431.4" width="245.6" height="28.27" fill="#b0c4ec"/><rect x="2041.8" y="431.9" width="244.6" height="27.27" fill="none" stroke="#6495ed" stroke-width="1"/><rect x="2041.3" y="431.4" width="10.8" height="28.27" fill="#6495ed"/><rect x="2041.3" y="459.67" width="268.4" height="28.27" fill="#b0c4ec"/><rect x="2041.8" y="460.17" width="267.4" height="27.27" fill="none" stroke="#6495ed" stroke-width="1"/><rect x="2041.3" y="459.67" width="10.8" height="28.27" fill="#6495ed"/><rect x="2041.3" y="487.95" width="412.4" height="28.28" fill="#b0c4ec"/><rect x="2041.8" y="488.45" width="411.4" height="27.28" fill="none" stroke="#6495ed" stroke-width="1"/><rect x="2041.3" y="487.95" width="10.8" height="28.28" fill="#6495ed"/><rect x="2041.3" y="516.23" width="221.7" height="28.27" fill="#b0c4ec"/><rect x="2041.8" y="516.73" width="220.7" height="27.27" fill="none" stroke="#6495ed" stroke-width="1"/><rect x="2041.3" y="516.23" width="10.8" height="28.27" fill="#b22222"/></svg>
<div class="a t" style="top:71px;font-size:15px;color:#404040;letter-spacing:0.28px;left:2033.1px;">купить дом +в анапе (162)</div>
<div class="a t" style="top:99px;font-size:15px;color:#404040;letter-spacing:0.34px;left:2057.2px;">дом +в анапе +для пмж (2)</div>
<div class="a t" style="top:128px;font-size:15px;color:#404040;letter-spacing:0.24px;left:2057.2px;">купить дом +в гастогаевке анапа (10)</div>
<div class="a t" style="top:156px;font-size:15px;color:#404040;letter-spacing:0.39px;left:2057.2px;">дом +на черноморском анапа (1)</div>
<div class="a t" style="top:184px;font-size:15px;color:#404040;letter-spacing:0.27px;left:2057.2px;">готовые дома +в анапе (3)</div>
<div class="a t" style="top:212px;font-size:15px;color:#404040;letter-spacing:0.29px;left:2057.2px;">купить коттедж +в анапе (39)</div>
<div class="a t" style="top:241px;font-size:15px;color:#404040;letter-spacing:0.36px;left:2083.3px;">купить коттедж +в анапе +у моря (5)</div>
<div class="a t" style="top:269px;font-size:15px;color:#404040;letter-spacing:0.34px;left:2083.3px;">коттеджи +в анапе купить +от застройщика (3)</div>
<div class="a t" style="top:297px;font-size:15px;color:#404040;letter-spacing:0.26px;left:2057.2px;">анапа недвижимость купить дом (17)</div>
<div class="a t" style="top:325px;font-size:15px;color:#404040;letter-spacing:0.17px;left:2057.2px;">купить таунхаус +в анапе (17)</div>
<div class="a t" style="top:354px;font-size:15px;color:#404040;letter-spacing:0.26px;left:2083.3px;">купить таунхаус +в анапе +у моря (3)</div>
<div class="a t" style="top:382px;font-size:15px;color:#404040;letter-spacing:0.32px;left:2057.2px;">купить дом +в анапе +от застройщика (8)</div>
<div class="a t" style="top:410px;font-size:15px;color:#404040;letter-spacing:0.3px;left:2057.2px;">купить дом +с участком +в анапе (8)</div>
<div class="a t" style="top:439px;font-size:15px;color:#404040;letter-spacing:0.29px;left:2057.2px;">дом анапа рядом +с морем (4)</div>
<div class="a t" style="top:467px;font-size:15px;color:#404040;letter-spacing:0.34px;left:2057.2px;">купить дом +в анапе +у моря (41)</div>
<div class="a t" style="top:495px;font-size:15px;color:#404040;letter-spacing:0.36px;left:2057.2px;">дома +в анапе купить недорого без посредников (14)</div>
<div class="a t" style="top:523px;font-size:15px;color:#404040;letter-spacing:0.34px;left:2057.2px;">купить домик +в анапе (27)</div>
<svg class="a" style="left:2018px;top:546.4px;" width="132" height="25.8" viewBox="0 0 132 25.8"><rect width="132" height="25.8" fill="#ffd2da"/></svg>
<div class="a t" style="top:552px;font-size:15px;color:#404040;letter-spacing:0.3px;left:2022.6px;">Корзина (2 351)</div>
<svg class="a" style="left:1999.2px;top:554px;" width="8" height="11.4" viewBox="0 0 8 11.4"><path d="M0.6,0.8 L6.8,5.7 L0.6,10.6 Z" fill="#fff" stroke="#8a8a8a" stroke-width="1"/></svg>
<div class="a" style="left:2514px;top:834px;width:30px;height:30px;background:#e1e1e1;border:1px solid #d2d2d2;"></div>
<svg class="a" style="left:2521px;top:840.6px;" width="16.4" height="16.4" viewBox="0 0 16.4 16.4"><path d="M1,1 L15.4,15.4 M15.4,1 L1,15.4" stroke="#f07878" stroke-width="2.2"/></svg>
<svg class="a" style="left:2532px;top:822.4px;" width="23.2" height="23.2" viewBox="0 0 23.2 23.2"><circle cx="11.6" cy="11.6" r="11.5" fill="#fa8072"/><text x="7.6" y="16.6" font-family="Liberation Sans" font-weight="700" font-size="14" fill="#fff">4</text></svg>
<div class="a" style="left:1983px;top:878px;width:1px;height:213px;background:#a8a8a8;"></div>
<div class="a" style="left:2558.6px;top:878px;width:1px;height:182px;background:#a8a8a8;"></div>
<div class="a" style="left:1984px;top:906px;width:574.6px;height:153px;background:#fafafa;"></div>
<div class="a" style="left:2087px;top:1059px;width:472.6px;height:1px;background:#a8a8a8;"></div>
<div class="a" style="left:2087px;top:1059px;width:1px;height:32px;background:#a8a8a8;"></div>
<div class="a" style="left:1983px;top:1090px;width:105px;height:1px;background:#a8a8a8;"></div>
<div class="a t" style="top:886px;font-size:14.7px;color:#6e6e6e;letter-spacing:-0.3px;left:1996.8px;">Комментарий</div>
<svg class="a" style="left:2514.2px;top:885.2px;" width="10" height="12.8" viewBox="0 0 10 12.8"><path d="M1.9,0 H7.9 V8.3 H9.8 V9.8 H5.6 V12.7 H4.2 V9.8 H0 V8.3 H1.9 Z" fill="#8e8e8e"/></svg>
<svg class="a" style="left:2536.6px;top:885.6px;" width="12" height="12" viewBox="0 0 12 12"><path d="M1,1 L11,11 M11,1 L1,11" stroke="#5c5c5c" stroke-width="2.2"/></svg>
<svg class="a" style="left:1984px;top:909px;" width="178" height="44" viewBox="0 0 178 44"><path fill-rule="evenodd" fill="#ff0000" d="M3.2,1.5 H174 a2.6,2.6 0 0 1 2.6,2.6 V39.9 a2.6,2.6 0 0 1 -2.6,2.6 H3.2 a2.6,2.6 0 0 1 -2.6,-2.6 V4.1 a2.6,2.6 0 0 1 2.6,-2.6 Z M4.4,5.5 V38.4 H172.6 V5.5 Z"/></svg>
<div class="a t" style="top:919px;font-size:15px;color:#383838;font-weight:700;letter-spacing:-0.16px;left:1994px;">Выделено групп: 17</div>
<svg class="a" style="left:2527px;top:917.6px;" width="19" height="19" viewBox="0 0 19 19"><g transform="rotate(45 9.5 9.5)"><rect x="7.3" y="-1.4" width="4.4" height="2.6" fill="#e05a6a"/><rect x="7.3" y="1.2" width="4.4" height="1.8" fill="#b8c4d4"/><rect x="7.3" y="3" width="4.4" height="13" fill="#f4d46a" stroke="#c8a23c" stroke-width="0.5"/><path d="M7.3,16 H11.7 L9.5,20.6 Z" fill="#e8d0a0"/><path d="M8.7,19 H10.3 L9.5,20.8 Z" fill="#444"/></g></svg>
<div class="a t" style="top:1069px;font-size:15px;color:#1f8bdc;letter-spacing:0.01px;left:1988.2px;">Комментарий</div>
<div class="a t" style="top:1069px;font-size:15px;color:#666;letter-spacing:-0.11px;left:2092.8px;">Теги</div>
<div class="a t" style="top:1069px;font-size:15px;color:#666;letter-spacing:0.03px;left:2132.8px;">Фикс. настройки</div>
</body></html>
